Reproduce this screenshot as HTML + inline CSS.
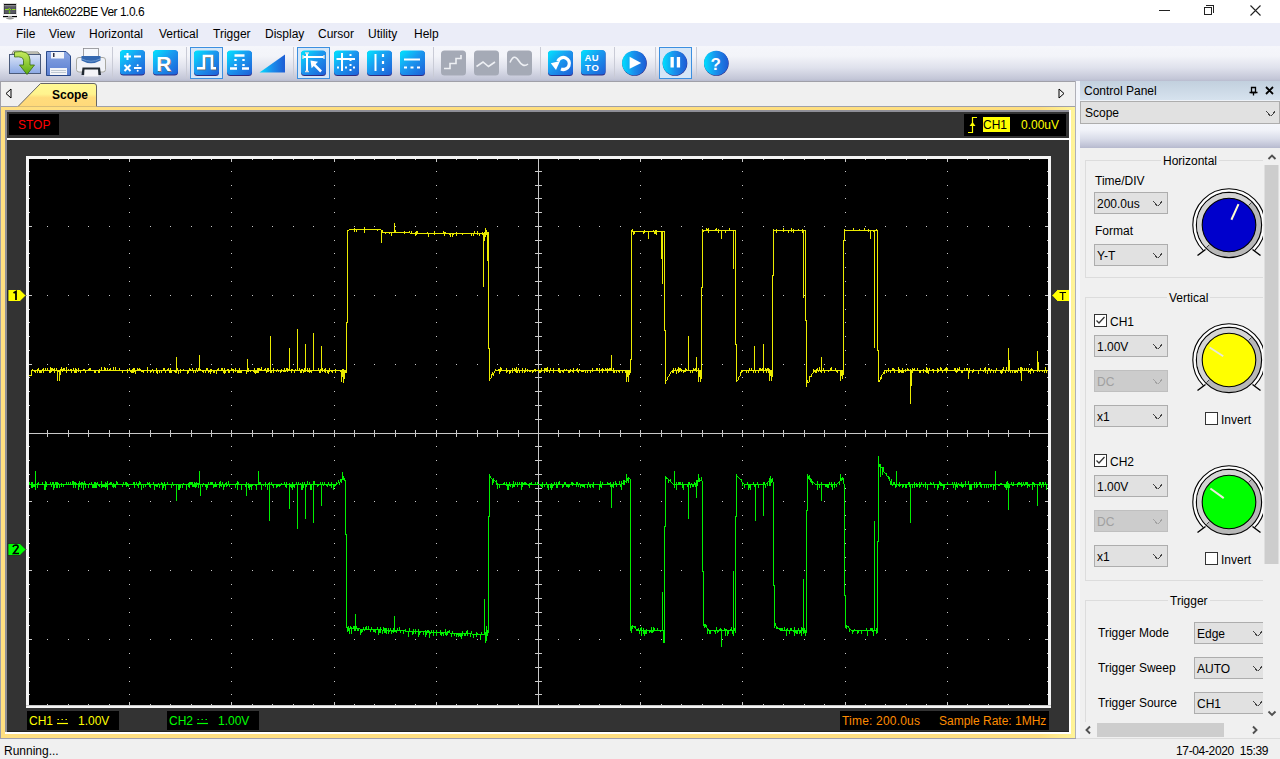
<!DOCTYPE html>
<html><head><meta charset="utf-8">
<style>
*{box-sizing:border-box}
html,body{margin:0;padding:0}
body{width:1280px;height:759px;overflow:hidden;position:relative;background:#f0f0f0;font-family:"Liberation Sans",sans-serif;font-size:12px;color:#000}
.a{position:absolute}
.t{position:absolute;white-space:nowrap;line-height:14px}
#title{left:0;top:0;width:1280px;height:23px;background:#fff}
#menu{left:0;top:23px;width:1280px;height:23px;background:#ebedf8}
#toolbar{left:0;top:46px;width:1280px;height:35px;background:linear-gradient(#f5f6fb 0px,#f3f4f9 10px,#dfe1ec 22px,#c3c6d7 33px,#b9bccf 35px)}
#tbline{left:0;top:81px;width:1075px;height:1px;background:#a0a0a8}
#tabstrip{left:0;top:82px;width:1075px;height:25px;background:#f0f0f0}
.sep{position:absolute;top:50px;width:1px;height:26px;background:#c9cbd6}
.ic{position:absolute;top:50px;width:25px;height:25px;border-radius:4px;background:linear-gradient(135deg,#00d8fa 0%,#1ea0ee 40%,#1a6ad8 100%);box-shadow:0 1px 1px rgba(60,60,90,.6)}
.gi{position:absolute;top:50px;width:25px;height:25px;border-radius:4px;background:#a5aab6}
.sel{position:absolute;top:47px;width:33px;height:32px;background:#d5e6f7;border:1px solid #3c8fe0}
.mi{position:absolute;top:26px;white-space:nowrap;line-height:16px;font-size:12px}
.ibox{position:absolute;background:#000}
.cb{position:absolute;height:22px;background:#e1e1e1;border:1px solid #adadad}
.cb span{position:absolute;left:2px;top:4px;line-height:14px;white-space:nowrap}
.cb i{position:absolute;right:5px;top:8px;width:9px;height:5px;background:linear-gradient(to top right,transparent calc(50% - 0.55px),#444 calc(50% - 0.55px),#444 calc(50% + 0.55px),transparent calc(50% + 0.55px)) left/50% 100% no-repeat,linear-gradient(to top left,transparent calc(50% - 0.55px),#444 calc(50% - 0.55px),#444 calc(50% + 0.55px),transparent calc(50% + 0.55px)) right/50% 100% no-repeat}
.cb.dis{background:#cccccc;border-color:#bfbfbf;color:#a0a0a0}
.cb.dis i{opacity:.3}
.chk{position:absolute;width:13px;height:13px;background:#fff;border:1px solid #333}
.grp{position:absolute;border:1px solid #dcdcdc}
.gl{position:absolute;background:#f0f0f0;padding:0 2px;line-height:14px;white-space:nowrap}
</style></head><body>

<!-- Title bar -->
<div id="title" class="a"></div>
<svg class="a" style="left:0;top:0" width="22" height="22" viewBox="0 0 22 22">
 <rect x="3" y="3" width="14" height="14" rx="0.5" fill="#d8d8d8"/>
 <rect x="4" y="4" width="12" height="10" fill="#111"/>
 <rect x="4.3" y="5.2" width="11.5" height="8.5" fill="#5a5a64"/>
 <rect x="4.3" y="5.2" width="11.5" height="1" fill="#9a9a9a"/>
 <path d="M5 9.5h2M7 9.5h1.5l1-1.5M10 9.5h1M12 9.5h3.5" stroke="#8fd820" stroke-width="1.2"/>
 <path d="M9.5 10.5v3" stroke="#6cc020" stroke-width="1.4"/>
 <rect x="3.5" y="14" width="13" height="2" fill="#f4f4f4"/>
 <rect x="3" y="16" width="14" height="1.2" fill="#000"/>
 <rect x="8" y="16.2" width="4" height="1.8" fill="#bbb"/>
 <ellipse cx="10" cy="18.6" rx="4" ry="0.8" fill="#999"/>
</svg>
<div class="t" style="left:23px;top:5px;font-size:12px;letter-spacing:-0.5px">Hantek6022BE Ver 1.0.6</div>
<!-- window controls -->
<div class="a" style="left:1159px;top:10px;width:11px;height:1px;background:#222"></div>
<div class="a" style="left:1204px;top:7px;width:8px;height:8px;border:1px solid #222"></div>
<div class="a" style="left:1206px;top:5px;width:8px;height:8px;border-top:1px solid #222;border-right:1px solid #222"></div>
<svg class="a" style="left:1250px;top:5px" width="11" height="11"><path d="M0.5 0.5L10.5 10.5M10.5 0.5L0.5 10.5" stroke="#222" stroke-width="1.1"/></svg>

<!-- Menu -->
<div id="menu" class="a"></div>
<div class="mi" style="left:16px">File</div>
<div class="mi" style="left:49px">View</div>
<div class="mi" style="left:89px">Horizontal</div>
<div class="mi" style="left:159px">Vertical</div>
<div class="mi" style="left:213px">Trigger</div>
<div class="mi" style="left:265px">Display</div>
<div class="mi" style="left:318px">Cursor</div>
<div class="mi" style="left:368px">Utility</div>
<div class="mi" style="left:414px">Help</div>

<!-- Toolbar -->
<div id="toolbar" class="a"></div>
<div id="tbline" class="a"></div>
<div class="a" style="left:1075px;top:81px;width:205px;height:1px;background:#a0a0a8"></div>
<div class="sel" style="left:190px"></div>
<div class="sel" style="left:297px"></div>
<div class="sel" style="left:659px"></div>
<svg class="a" style="left:0;top:46px" width="740" height="35">
<defs>
 <linearGradient id="bg1" x1="0" y1="0" x2="1" y2="1"><stop offset="0" stop-color="#00e6ff"/><stop offset="0.45" stop-color="#1a9af0"/><stop offset="1" stop-color="#1e5ed6"/></linearGradient>
 <linearGradient id="bg2" x1="0" y1="0" x2="1" y2="0"><stop offset="0" stop-color="#00e0ff"/><stop offset="0.5" stop-color="#1a8eec"/><stop offset="1" stop-color="#1e5cd4"/></linearGradient>
 <linearGradient id="fold" x1="0" y1="0" x2="0" y2="1"><stop offset="0" stop-color="#dde6f8"/><stop offset="1" stop-color="#8aa8e4"/></linearGradient>
 <linearGradient id="grn" x1="0" y1="0" x2="0" y2="1"><stop offset="0" stop-color="#c8ec60"/><stop offset="1" stop-color="#5aaa10"/></linearGradient>
 <linearGradient id="flop" x1="0" y1="0" x2="0" y2="1"><stop offset="0" stop-color="#8aa6e4"/><stop offset="1" stop-color="#5a7ed0"/></linearGradient>
</defs>
<g fill="#c9cbd6">
 <rect x="112" y="1" width="1" height="31"/><rect x="186" y="1" width="1" height="31"/><rect x="293" y="1" width="1" height="31"/>
 <rect x="433" y="1" width="1" height="31"/><rect x="540" y="1" width="1" height="31"/><rect x="614" y="1" width="1" height="31"/>
 <rect x="655" y="1" width="1" height="31"/><rect x="696" y="1" width="1" height="31"/>
</g>
<!-- folder -->
<path d="M12 8 L13.5 5 H22 L23 6 H38 L39.5 8 Z" fill="#f2f2ea" stroke="#6a6a5a" stroke-width="0.8"/>
<rect x="9.5" y="8.5" width="31" height="19" fill="url(#fold)" stroke="#4a5a7a" stroke-width="1"/>
<path d="M14.5 6 Q30 3.5 30 14 V19 H34.5 L27 28.5 L19.5 19 H23.5 V14.5 Q23.5 10 14.5 11 Z" fill="url(#grn)" stroke="#3a6a10" stroke-width="0.8"/>
<!-- save -->
<path d="M46.5 5.5 H66 L70.5 10 V29.5 H46.5 Z" fill="url(#flop)" stroke="#2a4a8a" stroke-width="1"/>
<rect x="51" y="6" width="13" height="6.5" fill="#f4f6fa"/><rect x="53" y="7" width="1.5" height="4" fill="#334"/>
<rect x="50" y="22" width="17" height="7" fill="#f2f4f8"/>
<path d="M51 24.5H66M51 26.5H66" stroke="#9ab" stroke-width="0.6"/>
<!-- printer -->
<rect x="83.5" y="2.5" width="15" height="9" fill="#f6f8fc" stroke="#8a8a90" stroke-width="0.8"/>
<rect x="76.5" y="11.5" width="29" height="14.5" rx="2.5" fill="#f0f2f8" stroke="#a0a098" stroke-width="0.9"/>
<path d="M81.5 10 H100.5 V14.5 Q91 20 81.5 14.5 Z" fill="#3468b0"/>
<path d="M82 13 Q91 17.5 100 13" fill="none" stroke="#6a98d0" stroke-width="1"/>
<path d="M82.5 21.5 H100 L101 29 H81.5 Z" fill="#202830"/>
<path d="M84.5 23.5 H98 L98.5 30.5 H84 Z" fill="#f4f4f8"/>
<!-- calc -->
<rect x="120" y="4.5" width="25" height="25" rx="3.5" fill="#302a80"/>
<rect x="120" y="4" width="25" height="24.5" rx="3.5" fill="url(#bg1)"/>
<path d="M124 10.5h7M127.5 7v7M134 10.5h7M124.5 19l6 6M130.5 19l-6 6M134 22h7.5" stroke="#fff" stroke-width="2"/>
<circle cx="137.7" cy="19.3" r="1" fill="#fff"/><circle cx="137.7" cy="24.7" r="1" fill="#fff"/>
<!-- R -->
<rect x="153" y="4.5" width="25" height="25" rx="3.5" fill="#302a80"/>
<rect x="153" y="4" width="25" height="24.5" rx="3.5" fill="url(#bg1)"/>
<text x="157" y="25.5" font-family="Liberation Sans" font-weight="bold" font-size="21" fill="#777">R</text>
<text x="156.3" y="24.8" font-family="Liberation Sans" font-weight="bold" font-size="21" fill="#fff">R</text>
<!-- square wave -->
<rect x="194" y="5" width="25" height="25" rx="3.5" fill="#302a80"/>
<rect x="194" y="4.5" width="25" height="24.5" rx="3.5" fill="url(#bg1)"/>
<path d="M197 22.3H204V10H212V22.3H216" fill="none" stroke="#666" stroke-width="2.6" transform="translate(0.6,0.6)"/>
<path d="M197 22.3H204V10H212V22.3H216" fill="none" stroke="#fff" stroke-width="2.6"/>
<!-- dotted square -->
<rect x="227" y="5" width="25" height="25" rx="3.5" fill="#302a80"/>
<rect x="227" y="4.5" width="25" height="24.5" rx="3.5" fill="url(#bg1)"/>
<path d="M230 22.5H237M242 22.5H249M234.5 9.5H244.5" stroke="#fff" stroke-width="2.4"/>
<path d="M235.5 13v2M235.5 18v2M243.5 13v2M243.5 18v2" stroke="#fff" stroke-width="2.4"/>
<!-- ramp -->
<path d="M259.5 26.5 L285 8.5 V26.5 Z" fill="url(#bg2)"/>
<!-- cursor -->
<rect x="301" y="5" width="25" height="25" rx="3.5" fill="#302a80"/>
<rect x="301" y="4.5" width="25" height="24.5" rx="3.5" fill="url(#bg1)"/>
<path d="M307 7V25.5M303 11H324" stroke="#fff" stroke-width="2"/>
<path d="M305 7h4M305 25.5h4M303 9v4M324 9v4" stroke="#ddd" stroke-width="1.4"/>
<path d="M310.5 14.5 L318 15.8 L315.6 18.2 L322 24.6 L320.2 26.4 L313.8 20 L311.6 22.2 Z" fill="#fff"/>
<!-- grid -->
<rect x="334" y="5" width="25" height="25" rx="3.5" fill="#302a80"/>
<rect x="334" y="4.5" width="25" height="24.5" rx="3.5" fill="url(#bg1)"/>
<path d="M342 7V25M336.5 13H355" stroke="#fff" stroke-width="2"/>
<path d="M350.5 8v2M350.5 13v2M350.5 18v2M350.5 23v2M337 21.5h2M345 21.5h2M353 21.5h2" stroke="#fff" stroke-width="2"/>
<!-- vertical lines -->
<rect x="367" y="5" width="25" height="25" rx="3.5" fill="#302a80"/>
<rect x="367" y="4.5" width="25" height="24.5" rx="3.5" fill="url(#bg1)"/>
<path d="M375.5 8V25" stroke="#fff" stroke-width="2"/>
<path d="M383 8v3M383 15v3M383 22v3" stroke="#fff" stroke-width="2.2"/>
<!-- horizontal lines -->
<rect x="400" y="5" width="25" height="25" rx="3.5" fill="#302a80"/>
<rect x="400" y="4.5" width="25" height="24.5" rx="3.5" fill="url(#bg1)"/>
<path d="M404 13.5H420" stroke="#fff" stroke-width="2"/>
<path d="M404 21.5h3M410.5 21.5h3M417 21.5h3" stroke="#fff" stroke-width="2.2"/>
<!-- gray -->
<rect x="441" y="4.5" width="25" height="25" rx="3.5" fill="#a5aab6"/>
<path d="M444 22.5H450V17.5H456V12.5H461V9" fill="none" stroke="#eef0f4" stroke-width="1.6"/>
<rect x="474" y="4.5" width="25" height="25" rx="3.5" fill="#a5aab6"/>
<path d="M476.5 20.5L483 16L488.5 20.5L495 16" fill="none" stroke="#eef0f4" stroke-width="1.6"/>
<rect x="507" y="4.5" width="25" height="25" rx="3.5" fill="#a5aab6"/>
<path d="M510 16.5Q514 7 518.5 14.5T528 18" fill="none" stroke="#eef0f4" stroke-width="1.6"/>
<!-- refresh -->
<rect x="548" y="5" width="25" height="25" rx="3.5" fill="#302a80"/>
<rect x="548" y="4.5" width="25" height="24.5" rx="3.5" fill="url(#bg1)"/>
<path d="M557.8 15.2 A6 6 0 1 1 561 23" fill="none" stroke="#fff" stroke-width="3.3"/>
<path d="M550.8 17.3 L560 15 L556 24 Z" fill="#fff"/>
<!-- AUTO -->
<rect x="581" y="4.5" width="24.5" height="25" rx="3.5" fill="#302a80"/>
<rect x="581" y="4" width="24.5" height="24.5" rx="3.5" fill="url(#bg1)"/>
<text x="584.5" y="15" font-family="Liberation Sans" font-weight="bold" font-size="9.5" fill="#fff" letter-spacing="0.5">AU</text>
<text x="585" y="25.3" font-family="Liberation Sans" font-weight="bold" font-size="9.5" fill="#fff" letter-spacing="0.8">TO</text>
<!-- play -->
<circle cx="634.5" cy="17.5" r="12.3" fill="#302a80"/>
<circle cx="634.3" cy="17" r="12.2" fill="url(#bg2)"/>
<path d="M629.6 10.7 V22.7 L641.2 16.9 Z" fill="#fff"/>
<!-- pause -->
<circle cx="675" cy="17.5" r="12.3" fill="#302a80"/>
<circle cx="674.8" cy="17" r="12.2" fill="url(#bg2)"/>
<rect x="670.5" y="11" width="3.3" height="10.5" fill="#fff"/><rect x="676.8" y="11" width="3.3" height="10.5" fill="#fff"/>
<!-- help -->
<circle cx="716.4" cy="17.5" r="12.3" fill="#302a80"/>
<circle cx="716.2" cy="17" r="12.2" fill="url(#bg2)"/>
<text x="710.5" y="24" font-family="Liberation Sans" font-weight="bold" font-size="17" fill="#fff">?</text>
</svg>


<!-- Tab strip -->
<div id="tabstrip" class="a"></div>
<div class="a" style="left:0;top:82px;width:1px;height:25px;background:#a0a0a8"></div>
<div class="a" style="left:0;top:106px;width:1075px;height:1px;background:#a0a0a8"></div>
<svg class="a" style="left:0;top:82px" width="1075" height="26">
 <defs><linearGradient id="tabg" x1="0" y1="0" x2="0" y2="1">
  <stop offset="0" stop-color="#fff994"/><stop offset="0.45" stop-color="#fff48e"/><stop offset="0.6" stop-color="#ffdc7c"/><stop offset="1" stop-color="#ffd97a"/></linearGradient></defs>
 <path d="M17.5 25 L40.5 1.5 H94 Q96.5 1.5 96.5 4 V25 Z" fill="url(#tabg)" stroke="#666" stroke-width="1"/>
 <rect x="17" y="24.5" width="80" height="2" fill="#ffd97a"/>
 <path d="M6 7.5 L11 3 V12 Z" transform="translate(0,4)" fill="none" stroke="#000" stroke-width="1"/>
 <path d="M1059 7 L1064 11.5 L1059 16 Z" fill="none" stroke="#000" stroke-width="1"/>
</svg>
<div class="t" style="left:52px;top:88px;font-weight:bold">Scope</div>

<!-- Scope frame -->
<div class="a" style="left:0;top:107px;width:1075px;height:632px;background:#ffdf80"></div>
<div class="a" style="left:1040px;top:107px;width:35px;height:632px;background:linear-gradient(90deg,#ffdf80,#fff59a)"></div>
<div class="a" style="left:0;top:107px;width:1px;height:632px;background:#a0a0a8"></div>
<div class="a" style="left:1075px;top:81px;width:1px;height:658px;background:#b0b0b8"></div>
<div class="a" style="left:0;top:738px;width:1076px;height:1px;background:#a0a0b0"></div>
<div class="a" style="left:5px;top:110px;width:1066px;height:624px;background:#fff"></div>
<div class="a" style="left:5px;top:110px;width:1064px;height:622px;background:#8e8e96"></div>
<div class="a" style="left:7px;top:112px;width:1062px;height:620px;background:#333"></div>
<div class="a" style="left:7px;top:731px;width:1062px;height:1px;background:#222"></div>

<div class="ibox" style="left:9px;top:114px;width:50px;height:21px"></div>
<div class="t" style="left:18px;top:118px;color:#f00;font-size:12px">STOP</div>
<div class="a" style="left:7px;top:138px;width:1062px;height:2px;background:#fff"></div>

<div class="ibox" style="left:964px;top:114px;width:102px;height:22px"></div>
<svg class="a" style="left:968px;top:116px" width="11" height="18"><path d="M0 16.5H4.5V1.5H9" fill="none" stroke="#ff0" stroke-width="1.2"/><path d="M1.5 10H7.5L4.5 6Z" fill="#ff0"/></svg>
<div class="a" style="left:983px;top:117px;width:27px;height:15px;background:#ff0"></div>
<div class="t" style="left:983px;top:118px;color:#000">CH1</div>
<div class="t" style="left:1021px;top:118px;color:#ff0">0.00uV</div>

<svg class="a" style="left:0;top:0" width="1280" height="759" shape-rendering="crispEdges">
 <rect x="26" y="156" width="1025" height="552" fill="#f4f4f4"/>
 <rect x="26" y="705" width="1025" height="1" fill="#c8c8c8"/>
 <rect x="29" y="159" width="1019" height="546" fill="#000"/>
 <path fill="#c8c8c8" d="M129 171h1v1h-1zM129 185h1v1h-1zM129 198h1v1h-1zM129 212h1v1h-1zM129 226h1v1h-1zM129 240h1v1h-1zM129 253h1v1h-1zM129 267h1v1h-1zM129 281h1v1h-1zM129 295h1v1h-1zM129 309h1v1h-1zM129 322h1v1h-1zM129 336h1v1h-1zM129 350h1v1h-1zM129 364h1v1h-1zM129 377h1v1h-1zM129 391h1v1h-1zM129 405h1v1h-1zM129 419h1v1h-1zM129 433h1v1h-1zM129 446h1v1h-1zM129 460h1v1h-1zM129 474h1v1h-1zM129 488h1v1h-1zM129 501h1v1h-1zM129 515h1v1h-1zM129 529h1v1h-1zM129 543h1v1h-1zM129 557h1v1h-1zM129 570h1v1h-1zM129 584h1v1h-1zM129 598h1v1h-1zM129 612h1v1h-1zM129 625h1v1h-1zM129 639h1v1h-1zM129 653h1v1h-1zM129 667h1v1h-1zM129 681h1v1h-1zM129 694h1v1h-1zM231 171h1v1h-1zM231 185h1v1h-1zM231 198h1v1h-1zM231 212h1v1h-1zM231 226h1v1h-1zM231 240h1v1h-1zM231 253h1v1h-1zM231 267h1v1h-1zM231 281h1v1h-1zM231 295h1v1h-1zM231 309h1v1h-1zM231 322h1v1h-1zM231 336h1v1h-1zM231 350h1v1h-1zM231 364h1v1h-1zM231 377h1v1h-1zM231 391h1v1h-1zM231 405h1v1h-1zM231 419h1v1h-1zM231 433h1v1h-1zM231 446h1v1h-1zM231 460h1v1h-1zM231 474h1v1h-1zM231 488h1v1h-1zM231 501h1v1h-1zM231 515h1v1h-1zM231 529h1v1h-1zM231 543h1v1h-1zM231 557h1v1h-1zM231 570h1v1h-1zM231 584h1v1h-1zM231 598h1v1h-1zM231 612h1v1h-1zM231 625h1v1h-1zM231 639h1v1h-1zM231 653h1v1h-1zM231 667h1v1h-1zM231 681h1v1h-1zM231 694h1v1h-1zM334 171h1v1h-1zM334 185h1v1h-1zM334 198h1v1h-1zM334 212h1v1h-1zM334 226h1v1h-1zM334 240h1v1h-1zM334 253h1v1h-1zM334 267h1v1h-1zM334 281h1v1h-1zM334 295h1v1h-1zM334 309h1v1h-1zM334 322h1v1h-1zM334 336h1v1h-1zM334 350h1v1h-1zM334 364h1v1h-1zM334 377h1v1h-1zM334 391h1v1h-1zM334 405h1v1h-1zM334 419h1v1h-1zM334 433h1v1h-1zM334 446h1v1h-1zM334 460h1v1h-1zM334 474h1v1h-1zM334 488h1v1h-1zM334 501h1v1h-1zM334 515h1v1h-1zM334 529h1v1h-1zM334 543h1v1h-1zM334 557h1v1h-1zM334 570h1v1h-1zM334 584h1v1h-1zM334 598h1v1h-1zM334 612h1v1h-1zM334 625h1v1h-1zM334 639h1v1h-1zM334 653h1v1h-1zM334 667h1v1h-1zM334 681h1v1h-1zM334 694h1v1h-1zM436 171h1v1h-1zM436 185h1v1h-1zM436 198h1v1h-1zM436 212h1v1h-1zM436 226h1v1h-1zM436 240h1v1h-1zM436 253h1v1h-1zM436 267h1v1h-1zM436 281h1v1h-1zM436 295h1v1h-1zM436 309h1v1h-1zM436 322h1v1h-1zM436 336h1v1h-1zM436 350h1v1h-1zM436 364h1v1h-1zM436 377h1v1h-1zM436 391h1v1h-1zM436 405h1v1h-1zM436 419h1v1h-1zM436 433h1v1h-1zM436 446h1v1h-1zM436 460h1v1h-1zM436 474h1v1h-1zM436 488h1v1h-1zM436 501h1v1h-1zM436 515h1v1h-1zM436 529h1v1h-1zM436 543h1v1h-1zM436 557h1v1h-1zM436 570h1v1h-1zM436 584h1v1h-1zM436 598h1v1h-1zM436 612h1v1h-1zM436 625h1v1h-1zM436 639h1v1h-1zM436 653h1v1h-1zM436 667h1v1h-1zM436 681h1v1h-1zM436 694h1v1h-1zM640 171h1v1h-1zM640 185h1v1h-1zM640 198h1v1h-1zM640 212h1v1h-1zM640 226h1v1h-1zM640 240h1v1h-1zM640 253h1v1h-1zM640 267h1v1h-1zM640 281h1v1h-1zM640 295h1v1h-1zM640 309h1v1h-1zM640 322h1v1h-1zM640 336h1v1h-1zM640 350h1v1h-1zM640 364h1v1h-1zM640 377h1v1h-1zM640 391h1v1h-1zM640 405h1v1h-1zM640 419h1v1h-1zM640 433h1v1h-1zM640 446h1v1h-1zM640 460h1v1h-1zM640 474h1v1h-1zM640 488h1v1h-1zM640 501h1v1h-1zM640 515h1v1h-1zM640 529h1v1h-1zM640 543h1v1h-1zM640 557h1v1h-1zM640 570h1v1h-1zM640 584h1v1h-1zM640 598h1v1h-1zM640 612h1v1h-1zM640 625h1v1h-1zM640 639h1v1h-1zM640 653h1v1h-1zM640 667h1v1h-1zM640 681h1v1h-1zM640 694h1v1h-1zM742 171h1v1h-1zM742 185h1v1h-1zM742 198h1v1h-1zM742 212h1v1h-1zM742 226h1v1h-1zM742 240h1v1h-1zM742 253h1v1h-1zM742 267h1v1h-1zM742 281h1v1h-1zM742 295h1v1h-1zM742 309h1v1h-1zM742 322h1v1h-1zM742 336h1v1h-1zM742 350h1v1h-1zM742 364h1v1h-1zM742 377h1v1h-1zM742 391h1v1h-1zM742 405h1v1h-1zM742 419h1v1h-1zM742 433h1v1h-1zM742 446h1v1h-1zM742 460h1v1h-1zM742 474h1v1h-1zM742 488h1v1h-1zM742 501h1v1h-1zM742 515h1v1h-1zM742 529h1v1h-1zM742 543h1v1h-1zM742 557h1v1h-1zM742 570h1v1h-1zM742 584h1v1h-1zM742 598h1v1h-1zM742 612h1v1h-1zM742 625h1v1h-1zM742 639h1v1h-1zM742 653h1v1h-1zM742 667h1v1h-1zM742 681h1v1h-1zM742 694h1v1h-1zM845 171h1v1h-1zM845 185h1v1h-1zM845 198h1v1h-1zM845 212h1v1h-1zM845 226h1v1h-1zM845 240h1v1h-1zM845 253h1v1h-1zM845 267h1v1h-1zM845 281h1v1h-1zM845 295h1v1h-1zM845 309h1v1h-1zM845 322h1v1h-1zM845 336h1v1h-1zM845 350h1v1h-1zM845 364h1v1h-1zM845 377h1v1h-1zM845 391h1v1h-1zM845 405h1v1h-1zM845 419h1v1h-1zM845 433h1v1h-1zM845 446h1v1h-1zM845 460h1v1h-1zM845 474h1v1h-1zM845 488h1v1h-1zM845 501h1v1h-1zM845 515h1v1h-1zM845 529h1v1h-1zM845 543h1v1h-1zM845 557h1v1h-1zM845 570h1v1h-1zM845 584h1v1h-1zM845 598h1v1h-1zM845 612h1v1h-1zM845 625h1v1h-1zM845 639h1v1h-1zM845 653h1v1h-1zM845 667h1v1h-1zM845 681h1v1h-1zM845 694h1v1h-1zM947 171h1v1h-1zM947 185h1v1h-1zM947 198h1v1h-1zM947 212h1v1h-1zM947 226h1v1h-1zM947 240h1v1h-1zM947 253h1v1h-1zM947 267h1v1h-1zM947 281h1v1h-1zM947 295h1v1h-1zM947 309h1v1h-1zM947 322h1v1h-1zM947 336h1v1h-1zM947 350h1v1h-1zM947 364h1v1h-1zM947 377h1v1h-1zM947 391h1v1h-1zM947 405h1v1h-1zM947 419h1v1h-1zM947 433h1v1h-1zM947 446h1v1h-1zM947 460h1v1h-1zM947 474h1v1h-1zM947 488h1v1h-1zM947 501h1v1h-1zM947 515h1v1h-1zM947 529h1v1h-1zM947 543h1v1h-1zM947 557h1v1h-1zM947 570h1v1h-1zM947 584h1v1h-1zM947 598h1v1h-1zM947 612h1v1h-1zM947 625h1v1h-1zM947 639h1v1h-1zM947 653h1v1h-1zM947 667h1v1h-1zM947 681h1v1h-1zM947 694h1v1h-1zM47 226h1v1h-1zM68 226h1v1h-1zM88 226h1v1h-1zM109 226h1v1h-1zM150 226h1v1h-1zM170 226h1v1h-1zM191 226h1v1h-1zM211 226h1v1h-1zM252 226h1v1h-1zM272 226h1v1h-1zM293 226h1v1h-1zM313 226h1v1h-1zM354 226h1v1h-1zM374 226h1v1h-1zM395 226h1v1h-1zM415 226h1v1h-1zM456 226h1v1h-1zM477 226h1v1h-1zM497 226h1v1h-1zM518 226h1v1h-1zM558 226h1v1h-1zM579 226h1v1h-1zM599 226h1v1h-1zM620 226h1v1h-1zM661 226h1v1h-1zM681 226h1v1h-1zM702 226h1v1h-1zM722 226h1v1h-1zM763 226h1v1h-1zM783 226h1v1h-1zM804 226h1v1h-1zM824 226h1v1h-1zM865 226h1v1h-1zM885 226h1v1h-1zM906 226h1v1h-1zM926 226h1v1h-1zM967 226h1v1h-1zM988 226h1v1h-1zM1008 226h1v1h-1zM1029 226h1v1h-1zM47 295h1v1h-1zM68 295h1v1h-1zM88 295h1v1h-1zM109 295h1v1h-1zM150 295h1v1h-1zM170 295h1v1h-1zM191 295h1v1h-1zM211 295h1v1h-1zM252 295h1v1h-1zM272 295h1v1h-1zM293 295h1v1h-1zM313 295h1v1h-1zM354 295h1v1h-1zM374 295h1v1h-1zM395 295h1v1h-1zM415 295h1v1h-1zM456 295h1v1h-1zM477 295h1v1h-1zM497 295h1v1h-1zM518 295h1v1h-1zM558 295h1v1h-1zM579 295h1v1h-1zM599 295h1v1h-1zM620 295h1v1h-1zM661 295h1v1h-1zM681 295h1v1h-1zM702 295h1v1h-1zM722 295h1v1h-1zM763 295h1v1h-1zM783 295h1v1h-1zM804 295h1v1h-1zM824 295h1v1h-1zM865 295h1v1h-1zM885 295h1v1h-1zM906 295h1v1h-1zM926 295h1v1h-1zM967 295h1v1h-1zM988 295h1v1h-1zM1008 295h1v1h-1zM1029 295h1v1h-1zM47 364h1v1h-1zM68 364h1v1h-1zM88 364h1v1h-1zM109 364h1v1h-1zM150 364h1v1h-1zM170 364h1v1h-1zM191 364h1v1h-1zM211 364h1v1h-1zM252 364h1v1h-1zM272 364h1v1h-1zM293 364h1v1h-1zM313 364h1v1h-1zM354 364h1v1h-1zM374 364h1v1h-1zM395 364h1v1h-1zM415 364h1v1h-1zM456 364h1v1h-1zM477 364h1v1h-1zM497 364h1v1h-1zM518 364h1v1h-1zM558 364h1v1h-1zM579 364h1v1h-1zM599 364h1v1h-1zM620 364h1v1h-1zM661 364h1v1h-1zM681 364h1v1h-1zM702 364h1v1h-1zM722 364h1v1h-1zM763 364h1v1h-1zM783 364h1v1h-1zM804 364h1v1h-1zM824 364h1v1h-1zM865 364h1v1h-1zM885 364h1v1h-1zM906 364h1v1h-1zM926 364h1v1h-1zM967 364h1v1h-1zM988 364h1v1h-1zM1008 364h1v1h-1zM1029 364h1v1h-1zM47 501h1v1h-1zM68 501h1v1h-1zM88 501h1v1h-1zM109 501h1v1h-1zM150 501h1v1h-1zM170 501h1v1h-1zM191 501h1v1h-1zM211 501h1v1h-1zM252 501h1v1h-1zM272 501h1v1h-1zM293 501h1v1h-1zM313 501h1v1h-1zM354 501h1v1h-1zM374 501h1v1h-1zM395 501h1v1h-1zM415 501h1v1h-1zM456 501h1v1h-1zM477 501h1v1h-1zM497 501h1v1h-1zM518 501h1v1h-1zM558 501h1v1h-1zM579 501h1v1h-1zM599 501h1v1h-1zM620 501h1v1h-1zM661 501h1v1h-1zM681 501h1v1h-1zM702 501h1v1h-1zM722 501h1v1h-1zM763 501h1v1h-1zM783 501h1v1h-1zM804 501h1v1h-1zM824 501h1v1h-1zM865 501h1v1h-1zM885 501h1v1h-1zM906 501h1v1h-1zM926 501h1v1h-1zM967 501h1v1h-1zM988 501h1v1h-1zM1008 501h1v1h-1zM1029 501h1v1h-1zM47 570h1v1h-1zM68 570h1v1h-1zM88 570h1v1h-1zM109 570h1v1h-1zM150 570h1v1h-1zM170 570h1v1h-1zM191 570h1v1h-1zM211 570h1v1h-1zM252 570h1v1h-1zM272 570h1v1h-1zM293 570h1v1h-1zM313 570h1v1h-1zM354 570h1v1h-1zM374 570h1v1h-1zM395 570h1v1h-1zM415 570h1v1h-1zM456 570h1v1h-1zM477 570h1v1h-1zM497 570h1v1h-1zM518 570h1v1h-1zM558 570h1v1h-1zM579 570h1v1h-1zM599 570h1v1h-1zM620 570h1v1h-1zM661 570h1v1h-1zM681 570h1v1h-1zM702 570h1v1h-1zM722 570h1v1h-1zM763 570h1v1h-1zM783 570h1v1h-1zM804 570h1v1h-1zM824 570h1v1h-1zM865 570h1v1h-1zM885 570h1v1h-1zM906 570h1v1h-1zM926 570h1v1h-1zM967 570h1v1h-1zM988 570h1v1h-1zM1008 570h1v1h-1zM1029 570h1v1h-1zM47 639h1v1h-1zM68 639h1v1h-1zM88 639h1v1h-1zM109 639h1v1h-1zM150 639h1v1h-1zM170 639h1v1h-1zM191 639h1v1h-1zM211 639h1v1h-1zM252 639h1v1h-1zM272 639h1v1h-1zM293 639h1v1h-1zM313 639h1v1h-1zM354 639h1v1h-1zM374 639h1v1h-1zM395 639h1v1h-1zM415 639h1v1h-1zM456 639h1v1h-1zM477 639h1v1h-1zM497 639h1v1h-1zM518 639h1v1h-1zM558 639h1v1h-1zM579 639h1v1h-1zM599 639h1v1h-1zM620 639h1v1h-1zM661 639h1v1h-1zM681 639h1v1h-1zM702 639h1v1h-1zM722 639h1v1h-1zM763 639h1v1h-1zM783 639h1v1h-1zM804 639h1v1h-1zM824 639h1v1h-1zM865 639h1v1h-1zM885 639h1v1h-1zM906 639h1v1h-1zM926 639h1v1h-1zM967 639h1v1h-1zM988 639h1v1h-1zM1008 639h1v1h-1zM1029 639h1v1h-1zM47 159h1v1h-1zM47 704h1v1h-1zM68 159h1v1h-1zM68 704h1v1h-1zM88 159h1v1h-1zM88 704h1v1h-1zM109 159h1v1h-1zM109 704h1v1h-1zM129 159h1v3h-1zM129 702h1v3h-1zM150 159h1v1h-1zM150 704h1v1h-1zM170 159h1v1h-1zM170 704h1v1h-1zM191 159h1v1h-1zM191 704h1v1h-1zM211 159h1v1h-1zM211 704h1v1h-1zM231 159h1v3h-1zM231 702h1v3h-1zM252 159h1v1h-1zM252 704h1v1h-1zM272 159h1v1h-1zM272 704h1v1h-1zM293 159h1v1h-1zM293 704h1v1h-1zM313 159h1v1h-1zM313 704h1v1h-1zM334 159h1v3h-1zM334 702h1v3h-1zM354 159h1v1h-1zM354 704h1v1h-1zM374 159h1v1h-1zM374 704h1v1h-1zM395 159h1v1h-1zM395 704h1v1h-1zM415 159h1v1h-1zM415 704h1v1h-1zM436 159h1v3h-1zM436 702h1v3h-1zM456 159h1v1h-1zM456 704h1v1h-1zM477 159h1v1h-1zM477 704h1v1h-1zM497 159h1v1h-1zM497 704h1v1h-1zM518 159h1v1h-1zM518 704h1v1h-1zM538 159h1v3h-1zM538 702h1v3h-1zM558 159h1v1h-1zM558 704h1v1h-1zM579 159h1v1h-1zM579 704h1v1h-1zM599 159h1v1h-1zM599 704h1v1h-1zM620 159h1v1h-1zM620 704h1v1h-1zM640 159h1v3h-1zM640 702h1v3h-1zM661 159h1v1h-1zM661 704h1v1h-1zM681 159h1v1h-1zM681 704h1v1h-1zM702 159h1v1h-1zM702 704h1v1h-1zM722 159h1v1h-1zM722 704h1v1h-1zM742 159h1v3h-1zM742 702h1v3h-1zM763 159h1v1h-1zM763 704h1v1h-1zM783 159h1v1h-1zM783 704h1v1h-1zM804 159h1v1h-1zM804 704h1v1h-1zM824 159h1v1h-1zM824 704h1v1h-1zM845 159h1v3h-1zM845 702h1v3h-1zM865 159h1v1h-1zM865 704h1v1h-1zM885 159h1v1h-1zM885 704h1v1h-1zM906 159h1v1h-1zM906 704h1v1h-1zM926 159h1v1h-1zM926 704h1v1h-1zM947 159h1v3h-1zM947 702h1v3h-1zM967 159h1v1h-1zM967 704h1v1h-1zM988 159h1v1h-1zM988 704h1v1h-1zM1008 159h1v1h-1zM1008 704h1v1h-1zM1029 159h1v1h-1zM1029 704h1v1h-1zM29 171h1v1h-1zM1047 171h1v1h-1zM29 185h1v1h-1zM1047 185h1v1h-1zM29 198h1v1h-1zM1047 198h1v1h-1zM29 212h1v1h-1zM1047 212h1v1h-1zM29 226h3v1h-3zM1045 226h3v1h-3zM29 240h1v1h-1zM1047 240h1v1h-1zM29 253h1v1h-1zM1047 253h1v1h-1zM29 267h1v1h-1zM1047 267h1v1h-1zM29 281h1v1h-1zM1047 281h1v1h-1zM29 295h3v1h-3zM1045 295h3v1h-3zM29 309h1v1h-1zM1047 309h1v1h-1zM29 322h1v1h-1zM1047 322h1v1h-1zM29 336h1v1h-1zM1047 336h1v1h-1zM29 350h1v1h-1zM1047 350h1v1h-1zM29 364h3v1h-3zM1045 364h3v1h-3zM29 377h1v1h-1zM1047 377h1v1h-1zM29 391h1v1h-1zM1047 391h1v1h-1zM29 405h1v1h-1zM1047 405h1v1h-1zM29 419h1v1h-1zM1047 419h1v1h-1zM29 433h3v1h-3zM1045 433h3v1h-3zM29 446h1v1h-1zM1047 446h1v1h-1zM29 460h1v1h-1zM1047 460h1v1h-1zM29 474h1v1h-1zM1047 474h1v1h-1zM29 488h1v1h-1zM1047 488h1v1h-1zM29 501h3v1h-3zM1045 501h3v1h-3zM29 515h1v1h-1zM1047 515h1v1h-1zM29 529h1v1h-1zM1047 529h1v1h-1zM29 543h1v1h-1zM1047 543h1v1h-1zM29 557h1v1h-1zM1047 557h1v1h-1zM29 570h3v1h-3zM1045 570h3v1h-3zM29 584h1v1h-1zM1047 584h1v1h-1zM29 598h1v1h-1zM1047 598h1v1h-1zM29 612h1v1h-1zM1047 612h1v1h-1zM29 625h1v1h-1zM1047 625h1v1h-1zM29 639h3v1h-3zM1045 639h3v1h-3zM29 653h1v1h-1zM1047 653h1v1h-1zM29 667h1v1h-1zM1047 667h1v1h-1zM29 681h1v1h-1zM1047 681h1v1h-1zM29 694h1v1h-1zM1047 694h1v1h-1zM538 159h1v546h-1zM29 433h1019v1h-1019zM535 171h7v1h-7zM535 185h7v1h-7zM535 198h7v1h-7zM535 212h7v1h-7zM535 226h7v1h-7zM535 240h7v1h-7zM535 253h7v1h-7zM535 267h7v1h-7zM535 281h7v1h-7zM535 295h7v1h-7zM535 309h7v1h-7zM535 322h7v1h-7zM535 336h7v1h-7zM535 350h7v1h-7zM535 364h7v1h-7zM535 377h7v1h-7zM535 391h7v1h-7zM535 405h7v1h-7zM535 419h7v1h-7zM535 446h7v1h-7zM535 460h7v1h-7zM535 474h7v1h-7zM535 488h7v1h-7zM535 501h7v1h-7zM535 515h7v1h-7zM535 529h7v1h-7zM535 543h7v1h-7zM535 557h7v1h-7zM535 570h7v1h-7zM535 584h7v1h-7zM535 598h7v1h-7zM535 612h7v1h-7zM535 625h7v1h-7zM535 639h7v1h-7zM535 653h7v1h-7zM535 667h7v1h-7zM535 681h7v1h-7zM535 694h7v1h-7zM47 430h1v7h-1zM68 430h1v7h-1zM88 430h1v7h-1zM109 430h1v7h-1zM129 430h1v7h-1zM150 430h1v7h-1zM170 430h1v7h-1zM191 430h1v7h-1zM211 430h1v7h-1zM231 430h1v7h-1zM252 430h1v7h-1zM272 430h1v7h-1zM293 430h1v7h-1zM313 430h1v7h-1zM334 430h1v7h-1zM354 430h1v7h-1zM374 430h1v7h-1zM395 430h1v7h-1zM415 430h1v7h-1zM436 430h1v7h-1zM456 430h1v7h-1zM477 430h1v7h-1zM497 430h1v7h-1zM518 430h1v7h-1zM558 430h1v7h-1zM579 430h1v7h-1zM599 430h1v7h-1zM620 430h1v7h-1zM640 430h1v7h-1zM661 430h1v7h-1zM681 430h1v7h-1zM702 430h1v7h-1zM722 430h1v7h-1zM742 430h1v7h-1zM763 430h1v7h-1zM783 430h1v7h-1zM804 430h1v7h-1zM824 430h1v7h-1zM845 430h1v7h-1zM865 430h1v7h-1zM885 430h1v7h-1zM906 430h1v7h-1zM926 430h1v7h-1zM947 430h1v7h-1zM967 430h1v7h-1zM988 430h1v7h-1zM1008 430h1v7h-1zM1029 430h1v7h-1z"/>
 <path fill="#ebeb00" d="M29 375h1v1h-1zM30 375h1v1h-1zM31 370h1v6h-1zM32 369h1v2h-1zM33 370h1v1h-1zM34 370h1v2h-1zM35 370h1v3h-1zM36 370h1v1h-1zM37 369h1v4h-1zM38 368h1v3h-1zM39 370h1v3h-1zM40 370h1v3h-1zM41 370h1v3h-1zM42 369h1v2h-1zM43 368h1v5h-1zM44 370h1v1h-1zM45 368h1v3h-1zM46 370h1v1h-1zM47 368h1v3h-1zM48 370h1v1h-1zM49 370h1v3h-1zM50 367h1v6h-1zM51 368h1v4h-1zM52 368h1v3h-1zM53 369h1v2h-1zM54 368h1v5h-1zM55 370h1v1h-1zM56 368h1v3h-1zM57 370h1v11h-1zM58 370h1v2h-1zM59 370h1v11h-1zM60 369h1v6h-1zM61 367h1v4h-1zM62 369h1v3h-1zM63 368h1v3h-1zM64 368h1v3h-1zM65 370h1v1h-1zM66 367h1v6h-1zM67 370h1v1h-1zM68 369h1v2h-1zM69 370h1v1h-1zM70 369h1v2h-1zM71 369h1v4h-1zM72 370h1v1h-1zM73 368h1v3h-1zM74 370h1v3h-1zM75 368h1v5h-1zM76 369h1v4h-1zM77 370h1v1h-1zM78 368h1v4h-1zM79 370h1v1h-1zM80 370h1v3h-1zM81 370h1v1h-1zM82 370h1v1h-1zM83 369h1v2h-1zM84 369h1v2h-1zM85 370h1v3h-1zM86 370h1v1h-1zM87 370h1v1h-1zM88 369h1v2h-1zM89 368h1v3h-1zM90 368h1v3h-1zM91 370h1v1h-1zM92 370h1v1h-1zM93 370h1v1h-1zM94 370h1v3h-1zM95 370h1v3h-1zM96 370h1v1h-1zM97 370h1v1h-1zM98 370h1v3h-1zM99 369h1v4h-1zM100 370h1v1h-1zM101 367h1v4h-1zM102 370h1v1h-1zM103 370h1v1h-1zM104 367h1v4h-1zM105 368h1v3h-1zM106 370h1v1h-1zM107 368h1v3h-1zM108 370h1v1h-1zM109 369h1v2h-1zM110 368h1v3h-1zM111 370h1v1h-1zM112 370h1v1h-1zM113 367h1v4h-1zM114 370h1v1h-1zM115 367h1v4h-1zM116 370h1v1h-1zM117 370h1v1h-1zM118 370h1v1h-1zM119 368h1v3h-1zM120 370h1v1h-1zM121 370h1v1h-1zM122 370h1v3h-1zM123 370h1v1h-1zM124 370h1v1h-1zM125 370h1v1h-1zM126 370h1v1h-1zM127 369h1v4h-1zM128 370h1v1h-1zM129 368h1v3h-1zM130 370h1v2h-1zM131 370h1v3h-1zM132 369h1v4h-1zM133 368h1v5h-1zM134 368h1v4h-1zM135 370h1v4h-1zM136 370h1v1h-1zM137 368h1v3h-1zM138 369h1v2h-1zM139 368h1v3h-1zM140 369h1v2h-1zM141 370h1v2h-1zM142 370h1v2h-1zM143 370h1v3h-1zM144 370h1v1h-1zM145 370h1v1h-1zM146 370h1v1h-1zM147 367h1v6h-1zM148 370h1v1h-1zM149 370h1v1h-1zM150 370h1v3h-1zM151 370h1v2h-1zM152 369h1v2h-1zM153 370h1v3h-1zM154 370h1v1h-1zM155 370h1v1h-1zM156 368h1v5h-1zM157 370h1v4h-1zM158 370h1v1h-1zM159 370h1v3h-1zM160 370h1v1h-1zM161 370h1v3h-1zM162 370h1v1h-1zM163 368h1v3h-1zM164 368h1v3h-1zM165 370h1v3h-1zM166 370h1v1h-1zM167 369h1v2h-1zM168 368h1v3h-1zM169 370h1v3h-1zM170 368h1v5h-1zM171 370h1v3h-1zM172 370h1v1h-1zM173 370h1v1h-1zM174 370h1v2h-1zM175 370h1v3h-1zM176 357h1v16h-1zM177 368h1v3h-1zM178 370h1v4h-1zM179 370h1v1h-1zM180 369h1v4h-1zM181 370h1v1h-1zM182 370h1v1h-1zM183 369h1v2h-1zM184 370h1v1h-1zM185 370h1v1h-1zM186 370h1v1h-1zM187 370h1v4h-1zM188 370h1v3h-1zM189 368h1v3h-1zM190 369h1v2h-1zM191 370h1v1h-1zM192 368h1v3h-1zM193 370h1v3h-1zM194 370h1v1h-1zM195 370h1v3h-1zM196 368h1v3h-1zM197 370h1v2h-1zM198 368h1v3h-1zM199 355h1v16h-1zM200 369h1v2h-1zM201 370h1v1h-1zM202 370h1v2h-1zM203 370h1v3h-1zM204 370h1v1h-1zM205 370h1v3h-1zM206 368h1v3h-1zM207 368h1v3h-1zM208 370h1v3h-1zM209 370h1v2h-1zM210 369h1v5h-1zM211 369h1v3h-1zM212 370h1v1h-1zM213 370h1v3h-1zM214 370h1v3h-1zM215 370h1v1h-1zM216 370h1v4h-1zM217 369h1v2h-1zM218 368h1v3h-1zM219 370h1v1h-1zM220 370h1v1h-1zM221 368h1v3h-1zM222 368h1v3h-1zM223 370h1v3h-1zM224 368h1v6h-1zM225 370h1v3h-1zM226 370h1v1h-1zM227 369h1v2h-1zM228 369h1v4h-1zM229 370h1v3h-1zM230 370h1v1h-1zM231 368h1v3h-1zM232 369h1v2h-1zM233 369h1v4h-1zM234 370h1v1h-1zM235 368h1v4h-1zM236 370h1v1h-1zM237 370h1v3h-1zM238 370h1v3h-1zM239 368h1v5h-1zM240 370h1v3h-1zM241 370h1v3h-1zM242 370h1v1h-1zM243 370h1v1h-1zM244 370h1v1h-1zM245 370h1v1h-1zM246 370h1v4h-1zM247 359h1v13h-1zM248 368h1v4h-1zM249 370h1v1h-1zM250 370h1v2h-1zM251 370h1v1h-1zM252 370h1v1h-1zM253 370h1v2h-1zM254 368h1v5h-1zM255 370h1v4h-1zM256 370h1v3h-1zM257 368h1v5h-1zM258 368h1v5h-1zM259 368h1v3h-1zM260 369h1v2h-1zM261 367h1v4h-1zM262 370h1v1h-1zM263 370h1v1h-1zM264 369h1v2h-1zM265 368h1v3h-1zM266 370h1v3h-1zM267 368h1v4h-1zM268 368h1v4h-1zM269 370h1v1h-1zM270 336h1v37h-1zM271 370h1v3h-1zM272 370h1v1h-1zM273 368h1v5h-1zM274 370h1v1h-1zM275 370h1v1h-1zM276 370h1v2h-1zM277 369h1v2h-1zM278 370h1v2h-1zM279 370h1v1h-1zM280 370h1v3h-1zM281 369h1v3h-1zM282 370h1v1h-1zM283 370h1v2h-1zM284 368h1v4h-1zM285 370h1v2h-1zM286 368h1v3h-1zM287 368h1v4h-1zM288 369h1v2h-1zM289 348h1v23h-1zM290 370h1v1h-1zM291 369h1v4h-1zM292 369h1v2h-1zM293 370h1v1h-1zM294 370h1v3h-1zM295 369h1v2h-1zM296 370h1v1h-1zM297 329h1v42h-1zM298 370h1v1h-1zM299 368h1v3h-1zM300 370h1v3h-1zM301 369h1v4h-1zM302 369h1v2h-1zM303 370h1v3h-1zM304 368h1v4h-1zM305 344h1v28h-1zM306 370h1v1h-1zM307 368h1v4h-1zM308 370h1v2h-1zM309 368h1v5h-1zM310 370h1v2h-1zM311 370h1v3h-1zM312 370h1v1h-1zM313 333h1v38h-1zM314 370h1v1h-1zM315 370h1v1h-1zM316 370h1v1h-1zM317 370h1v1h-1zM318 368h1v3h-1zM319 370h1v3h-1zM320 369h1v4h-1zM321 346h1v25h-1zM322 368h1v4h-1zM323 370h1v1h-1zM324 369h1v3h-1zM325 368h1v5h-1zM326 370h1v1h-1zM327 370h1v3h-1zM328 370h1v4h-1zM329 368h1v4h-1zM330 370h1v1h-1zM331 370h1v2h-1zM332 370h1v3h-1zM333 370h1v1h-1zM334 370h1v1h-1zM335 369h1v4h-1zM336 370h1v1h-1zM337 370h1v1h-1zM338 370h1v1h-1zM339 370h1v1h-1zM340 370h1v2h-1zM341 370h1v12h-1zM342 369h1v8h-1zM343 369h1v14h-1zM344 370h1v9h-1zM345 370h1v3h-1zM346 322h1v51h-1zM347 230h1v93h-1zM348 230h1v1h-1zM349 229h1v1h-1zM350 229h1v1h-1zM351 229h1v1h-1zM352 229h1v1h-1zM353 229h1v1h-1zM354 228h1v4h-1zM355 229h1v1h-1zM356 229h1v3h-1zM357 229h1v1h-1zM358 229h1v1h-1zM359 229h1v1h-1zM360 229h1v1h-1zM361 229h1v1h-1zM362 229h1v1h-1zM363 229h1v1h-1zM364 227h1v6h-1zM365 229h1v1h-1zM366 229h1v1h-1zM367 229h1v1h-1zM368 229h1v1h-1zM369 229h1v1h-1zM370 229h1v1h-1zM371 229h1v1h-1zM372 229h1v1h-1zM373 229h1v1h-1zM374 229h1v1h-1zM375 229h1v1h-1zM376 229h1v1h-1zM377 229h1v2h-1zM378 229h1v1h-1zM379 229h1v1h-1zM380 229h1v1h-1zM381 230h1v13h-1zM382 230h1v3h-1zM383 232h1v1h-1zM384 232h1v1h-1zM385 232h1v2h-1zM386 232h1v1h-1zM387 232h1v1h-1zM388 232h1v1h-1zM389 232h1v2h-1zM390 232h1v1h-1zM391 232h1v4h-1zM392 232h1v1h-1zM393 232h1v1h-1zM394 223h1v10h-1zM395 230h1v3h-1zM396 232h1v1h-1zM397 232h1v1h-1zM398 232h1v1h-1zM399 232h1v1h-1zM400 232h1v1h-1zM401 232h1v1h-1zM402 232h1v1h-1zM403 232h1v1h-1zM404 231h1v3h-1zM405 232h1v1h-1zM406 232h1v1h-1zM407 232h1v1h-1zM408 232h1v1h-1zM409 231h1v2h-1zM410 233h1v1h-1zM411 231h1v3h-1zM412 233h1v1h-1zM413 233h1v1h-1zM414 233h1v1h-1zM415 232h1v4h-1zM416 231h1v4h-1zM417 231h1v3h-1zM418 233h1v1h-1zM419 233h1v1h-1zM420 233h1v1h-1zM421 233h1v1h-1zM422 233h1v1h-1zM423 233h1v1h-1zM424 233h1v1h-1zM425 233h1v1h-1zM426 233h1v1h-1zM427 232h1v2h-1zM428 233h1v4h-1zM429 233h1v1h-1zM430 233h1v1h-1zM431 233h1v1h-1zM432 233h1v1h-1zM433 233h1v1h-1zM434 231h1v4h-1zM435 233h1v1h-1zM436 233h1v1h-1zM437 233h1v1h-1zM438 233h1v1h-1zM439 233h1v1h-1zM440 233h1v1h-1zM441 233h1v1h-1zM442 233h1v1h-1zM443 231h1v3h-1zM444 232h1v4h-1zM445 232h1v2h-1zM446 233h1v1h-1zM447 233h1v1h-1zM448 233h1v1h-1zM449 233h1v2h-1zM450 233h1v4h-1zM451 233h1v1h-1zM452 233h1v4h-1zM453 233h1v2h-1zM454 233h1v1h-1zM455 233h1v1h-1zM456 232h1v4h-1zM457 233h1v1h-1zM458 233h1v1h-1zM459 233h1v1h-1zM460 233h1v1h-1zM461 233h1v1h-1zM462 233h1v2h-1zM463 233h1v1h-1zM464 233h1v1h-1zM465 233h1v1h-1zM466 233h1v1h-1zM467 233h1v1h-1zM468 233h1v1h-1zM469 233h1v1h-1zM470 233h1v1h-1zM471 233h1v3h-1zM472 233h1v1h-1zM473 233h1v3h-1zM474 231h1v3h-1zM475 233h1v1h-1zM476 233h1v1h-1zM477 231h1v4h-1zM478 233h1v1h-1zM479 233h1v3h-1zM480 233h1v1h-1zM481 233h1v1h-1zM482 232h1v3h-1zM483 233h1v54h-1zM484 232h1v9h-1zM485 228h1v9h-1zM486 230h1v5h-1zM487 232h1v29h-1zM488 232h1v117h-1zM489 348h1v33h-1zM490 378h1v1h-1zM491 374h1v4h-1zM492 372h1v3h-1zM493 373h1v3h-1zM494 371h1v2h-1zM495 369h1v2h-1zM496 370h1v1h-1zM497 370h1v1h-1zM498 369h1v2h-1zM499 369h1v5h-1zM500 367h1v5h-1zM501 368h1v3h-1zM502 370h1v1h-1zM503 370h1v1h-1zM504 370h1v1h-1zM505 370h1v1h-1zM506 368h1v5h-1zM507 370h1v2h-1zM508 370h1v1h-1zM509 370h1v4h-1zM510 370h1v3h-1zM511 370h1v1h-1zM512 368h1v5h-1zM513 370h1v1h-1zM514 368h1v3h-1zM515 369h1v3h-1zM516 367h1v6h-1zM517 370h1v3h-1zM518 368h1v3h-1zM519 370h1v3h-1zM520 370h1v1h-1zM521 370h1v1h-1zM522 368h1v5h-1zM523 370h1v1h-1zM524 370h1v3h-1zM525 368h1v4h-1zM526 370h1v1h-1zM527 369h1v3h-1zM528 370h1v1h-1zM529 370h1v2h-1zM530 370h1v2h-1zM531 370h1v1h-1zM532 370h1v3h-1zM533 370h1v2h-1zM534 369h1v2h-1zM535 369h1v3h-1zM536 370h1v1h-1zM537 370h1v1h-1zM538 369h1v2h-1zM539 370h1v3h-1zM540 370h1v3h-1zM541 368h1v4h-1zM542 370h1v1h-1zM543 370h1v1h-1zM544 368h1v5h-1zM545 368h1v3h-1zM546 368h1v4h-1zM547 367h1v5h-1zM548 370h1v1h-1zM549 370h1v3h-1zM550 368h1v3h-1zM551 370h1v1h-1zM552 370h1v1h-1zM553 368h1v5h-1zM554 370h1v1h-1zM555 370h1v1h-1zM556 370h1v1h-1zM557 370h1v1h-1zM558 368h1v4h-1zM559 368h1v5h-1zM560 370h1v3h-1zM561 370h1v1h-1zM562 370h1v2h-1zM563 370h1v3h-1zM564 369h1v2h-1zM565 370h1v1h-1zM566 369h1v2h-1zM567 370h1v1h-1zM568 370h1v3h-1zM569 370h1v3h-1zM570 369h1v3h-1zM571 370h1v1h-1zM572 370h1v2h-1zM573 368h1v5h-1zM574 370h1v1h-1zM575 370h1v1h-1zM576 369h1v2h-1zM577 368h1v4h-1zM578 370h1v3h-1zM579 369h1v2h-1zM580 370h1v1h-1zM581 370h1v2h-1zM582 370h1v2h-1zM583 370h1v2h-1zM584 370h1v1h-1zM585 370h1v3h-1zM586 370h1v1h-1zM587 370h1v3h-1zM588 370h1v1h-1zM589 370h1v1h-1zM590 370h1v3h-1zM591 370h1v1h-1zM592 368h1v4h-1zM593 370h1v1h-1zM594 370h1v1h-1zM595 370h1v1h-1zM596 368h1v3h-1zM597 368h1v3h-1zM598 370h1v1h-1zM599 368h1v5h-1zM600 370h1v1h-1zM601 369h1v2h-1zM602 368h1v5h-1zM603 369h1v2h-1zM604 370h1v1h-1zM605 368h1v3h-1zM606 369h1v2h-1zM607 368h1v5h-1zM608 369h1v2h-1zM609 368h1v3h-1zM610 368h1v3h-1zM611 355h1v16h-1zM612 370h1v1h-1zM613 368h1v5h-1zM614 370h1v3h-1zM615 370h1v1h-1zM616 370h1v3h-1zM617 370h1v1h-1zM618 370h1v2h-1zM619 370h1v3h-1zM620 370h1v1h-1zM621 370h1v1h-1zM622 370h1v3h-1zM623 370h1v1h-1zM624 370h1v1h-1zM625 370h1v3h-1zM626 370h1v12h-1zM627 370h1v7h-1zM628 370h1v12h-1zM629 370h1v5h-1zM630 359h1v14h-1zM631 230h1v130h-1zM632 229h1v3h-1zM633 231h1v4h-1zM634 231h1v3h-1zM635 231h1v1h-1zM636 231h1v1h-1zM637 231h1v1h-1zM638 231h1v1h-1zM639 231h1v1h-1zM640 231h1v1h-1zM641 231h1v1h-1zM642 231h1v1h-1zM643 231h1v3h-1zM644 230h1v3h-1zM645 231h1v1h-1zM646 231h1v1h-1zM647 231h1v1h-1zM648 231h1v8h-1zM649 231h1v1h-1zM650 231h1v1h-1zM651 231h1v1h-1zM652 231h1v1h-1zM653 230h1v2h-1zM654 231h1v3h-1zM655 230h1v4h-1zM656 230h1v5h-1zM657 231h1v1h-1zM658 231h1v1h-1zM659 231h1v1h-1zM660 231h1v1h-1zM661 231h1v28h-1zM662 231h1v53h-1zM663 231h1v1h-1zM664 231h1v100h-1zM665 330h1v54h-1zM666 380h1v1h-1zM667 377h1v3h-1zM668 376h1v1h-1zM669 374h1v2h-1zM670 372h1v2h-1zM671 371h1v1h-1zM672 370h1v3h-1zM673 368h1v5h-1zM674 370h1v1h-1zM675 368h1v3h-1zM676 370h1v4h-1zM677 369h1v2h-1zM678 367h1v6h-1zM679 368h1v4h-1zM680 368h1v3h-1zM681 369h1v3h-1zM682 370h1v1h-1zM683 370h1v3h-1zM684 370h1v2h-1zM685 368h1v4h-1zM686 369h1v2h-1zM687 370h1v1h-1zM688 336h1v35h-1zM689 370h1v1h-1zM690 370h1v3h-1zM691 370h1v1h-1zM692 370h1v3h-1zM693 368h1v3h-1zM694 369h1v2h-1zM695 368h1v3h-1zM696 357h1v15h-1zM697 370h1v1h-1zM698 368h1v14h-1zM699 370h1v7h-1zM700 370h1v12h-1zM701 287h1v92h-1zM702 229h1v59h-1zM703 230h1v2h-1zM704 230h1v1h-1zM705 230h1v1h-1zM706 228h1v3h-1zM707 229h1v2h-1zM708 228h1v5h-1zM709 230h1v1h-1zM710 230h1v1h-1zM711 230h1v1h-1zM712 230h1v1h-1zM713 230h1v1h-1zM714 230h1v1h-1zM715 229h1v2h-1zM716 228h1v3h-1zM717 230h1v1h-1zM718 229h1v4h-1zM719 230h1v1h-1zM720 230h1v1h-1zM721 230h1v9h-1zM722 230h1v1h-1zM723 230h1v1h-1zM724 230h1v1h-1zM725 230h1v3h-1zM726 230h1v1h-1zM727 230h1v1h-1zM728 230h1v1h-1zM729 228h1v3h-1zM730 230h1v1h-1zM731 230h1v1h-1zM732 230h1v1h-1zM733 230h1v39h-1zM734 230h1v1h-1zM735 230h1v115h-1zM736 344h1v38h-1zM737 380h1v1h-1zM738 377h1v3h-1zM739 376h1v1h-1zM740 372h1v4h-1zM741 370h1v3h-1zM742 370h1v2h-1zM743 370h1v1h-1zM744 370h1v1h-1zM745 370h1v1h-1zM746 370h1v3h-1zM747 370h1v1h-1zM748 370h1v3h-1zM749 368h1v3h-1zM750 370h1v1h-1zM751 368h1v3h-1zM752 370h1v1h-1zM753 370h1v3h-1zM754 346h1v25h-1zM755 370h1v3h-1zM756 370h1v1h-1zM757 370h1v1h-1zM758 370h1v3h-1zM759 368h1v3h-1zM760 368h1v3h-1zM761 369h1v2h-1zM762 368h1v3h-1zM763 344h1v29h-1zM764 370h1v1h-1zM765 368h1v3h-1zM766 369h1v4h-1zM767 368h1v3h-1zM768 368h1v5h-1zM769 369h1v12h-1zM770 370h1v6h-1zM771 370h1v11h-1zM772 275h1v102h-1zM773 229h1v47h-1zM774 230h1v1h-1zM775 230h1v1h-1zM776 229h1v4h-1zM777 230h1v1h-1zM778 230h1v1h-1zM779 230h1v1h-1zM780 230h1v1h-1zM781 230h1v1h-1zM782 230h1v1h-1zM783 228h1v4h-1zM784 230h1v1h-1zM785 230h1v1h-1zM786 230h1v1h-1zM787 230h1v1h-1zM788 230h1v3h-1zM789 230h1v1h-1zM790 230h1v1h-1zM791 228h1v4h-1zM792 230h1v1h-1zM793 229h1v4h-1zM794 230h1v1h-1zM795 230h1v1h-1zM796 230h1v1h-1zM797 230h1v1h-1zM798 229h1v2h-1zM799 230h1v1h-1zM800 230h1v1h-1zM801 230h1v1h-1zM802 229h1v4h-1zM803 230h1v68h-1zM804 230h1v1h-1zM805 230h1v91h-1zM806 320h1v67h-1zM807 380h1v3h-1zM808 382h1v1h-1zM809 376h1v6h-1zM810 376h1v1h-1zM811 374h1v3h-1zM812 373h1v1h-1zM813 369h1v4h-1zM814 370h1v2h-1zM815 370h1v3h-1zM816 369h1v4h-1zM817 368h1v3h-1zM818 370h1v2h-1zM819 367h1v4h-1zM820 370h1v2h-1zM821 357h1v16h-1zM822 370h1v1h-1zM823 368h1v3h-1zM824 370h1v3h-1zM825 370h1v1h-1zM826 370h1v1h-1zM827 370h1v1h-1zM828 370h1v2h-1zM829 370h1v1h-1zM830 368h1v3h-1zM831 367h1v4h-1zM832 370h1v1h-1zM833 370h1v1h-1zM834 370h1v1h-1zM835 368h1v3h-1zM836 370h1v2h-1zM837 370h1v3h-1zM838 370h1v1h-1zM839 370h1v1h-1zM840 370h1v11h-1zM841 370h1v6h-1zM842 370h1v9h-1zM843 240h1v135h-1zM844 229h1v12h-1zM845 230h1v1h-1zM846 230h1v1h-1zM847 230h1v1h-1zM848 230h1v1h-1zM849 230h1v1h-1zM850 230h1v1h-1zM851 230h1v1h-1zM852 230h1v1h-1zM853 228h1v3h-1zM854 230h1v1h-1zM855 230h1v1h-1zM856 230h1v1h-1zM857 230h1v1h-1zM858 230h1v1h-1zM859 229h1v2h-1zM860 230h1v1h-1zM861 230h1v1h-1zM862 230h1v1h-1zM863 230h1v1h-1zM864 228h1v3h-1zM865 230h1v1h-1zM866 230h1v1h-1zM867 230h1v1h-1zM868 229h1v3h-1zM869 230h1v1h-1zM870 230h1v9h-1zM871 230h1v1h-1zM872 230h1v1h-1zM873 230h1v2h-1zM874 230h1v118h-1zM875 230h1v1h-1zM876 229h1v2h-1zM877 230h1v121h-1zM878 350h1v32h-1zM879 380h1v2h-1zM880 377h1v3h-1zM881 375h1v4h-1zM882 374h1v1h-1zM883 372h1v2h-1zM884 370h1v4h-1zM885 370h1v1h-1zM886 370h1v3h-1zM887 370h1v1h-1zM888 368h1v4h-1zM889 370h1v1h-1zM890 370h1v3h-1zM891 370h1v1h-1zM892 368h1v3h-1zM893 368h1v3h-1zM894 369h1v4h-1zM895 370h1v1h-1zM896 370h1v1h-1zM897 370h1v1h-1zM898 367h1v6h-1zM899 369h1v4h-1zM900 370h1v2h-1zM901 370h1v3h-1zM902 368h1v5h-1zM903 370h1v3h-1zM904 370h1v1h-1zM905 369h1v3h-1zM906 370h1v1h-1zM907 368h1v3h-1zM908 369h1v2h-1zM909 370h1v1h-1zM910 369h1v35h-1zM911 370h1v16h-1zM912 368h1v5h-1zM913 369h1v2h-1zM914 368h1v3h-1zM915 370h1v1h-1zM916 370h1v1h-1zM917 368h1v3h-1zM918 370h1v1h-1zM919 370h1v3h-1zM920 370h1v3h-1zM921 370h1v1h-1zM922 370h1v1h-1zM923 369h1v4h-1zM924 370h1v1h-1zM925 370h1v2h-1zM926 367h1v6h-1zM927 368h1v5h-1zM928 370h1v4h-1zM929 368h1v3h-1zM930 370h1v1h-1zM931 370h1v1h-1zM932 369h1v2h-1zM933 369h1v4h-1zM934 370h1v1h-1zM935 370h1v1h-1zM936 370h1v1h-1zM937 368h1v5h-1zM938 369h1v3h-1zM939 370h1v1h-1zM940 367h1v4h-1zM941 368h1v3h-1zM942 370h1v3h-1zM943 370h1v1h-1zM944 369h1v2h-1zM945 368h1v3h-1zM946 367h1v6h-1zM947 368h1v3h-1zM948 370h1v1h-1zM949 370h1v1h-1zM950 370h1v1h-1zM951 370h1v1h-1zM952 370h1v1h-1zM953 370h1v1h-1zM954 368h1v3h-1zM955 368h1v4h-1zM956 370h1v3h-1zM957 368h1v4h-1zM958 369h1v2h-1zM959 367h1v4h-1zM960 370h1v1h-1zM961 370h1v3h-1zM962 370h1v3h-1zM963 370h1v1h-1zM964 368h1v3h-1zM965 370h1v1h-1zM966 368h1v3h-1zM967 368h1v3h-1zM968 370h1v9h-1zM969 368h1v5h-1zM970 370h1v1h-1zM971 370h1v1h-1zM972 370h1v3h-1zM973 369h1v3h-1zM974 370h1v1h-1zM975 370h1v1h-1zM976 370h1v1h-1zM977 370h1v1h-1zM978 370h1v4h-1zM979 370h1v1h-1zM980 368h1v3h-1zM981 370h1v1h-1zM982 370h1v1h-1zM983 370h1v2h-1zM984 368h1v3h-1zM985 367h1v6h-1zM986 370h1v1h-1zM987 370h1v4h-1zM988 368h1v3h-1zM989 368h1v3h-1zM990 370h1v3h-1zM991 369h1v2h-1zM992 370h1v1h-1zM993 370h1v3h-1zM994 370h1v1h-1zM995 370h1v3h-1zM996 368h1v3h-1zM997 370h1v1h-1zM998 370h1v1h-1zM999 370h1v1h-1zM1000 370h1v3h-1zM1001 370h1v4h-1zM1002 369h1v4h-1zM1003 367h1v4h-1zM1004 370h1v1h-1zM1005 370h1v3h-1zM1006 367h1v4h-1zM1007 370h1v1h-1zM1008 348h1v24h-1zM1009 360h1v11h-1zM1010 370h1v3h-1zM1011 370h1v1h-1zM1012 370h1v3h-1zM1013 370h1v1h-1zM1014 370h1v3h-1zM1015 370h1v3h-1zM1016 370h1v2h-1zM1017 370h1v3h-1zM1018 368h1v3h-1zM1019 370h1v1h-1zM1020 367h1v6h-1zM1021 367h1v14h-1zM1022 368h1v3h-1zM1023 370h1v1h-1zM1024 368h1v3h-1zM1025 370h1v1h-1zM1026 368h1v3h-1zM1027 370h1v1h-1zM1028 368h1v5h-1zM1029 370h1v2h-1zM1030 369h1v5h-1zM1031 368h1v3h-1zM1032 369h1v2h-1zM1033 370h1v3h-1zM1034 370h1v1h-1zM1035 370h1v1h-1zM1036 370h1v1h-1zM1037 351h1v21h-1zM1038 362h1v9h-1zM1039 370h1v2h-1zM1040 370h1v1h-1zM1041 370h1v1h-1zM1042 370h1v2h-1zM1043 370h1v1h-1zM1044 370h1v3h-1zM1045 367h1v4h-1zM1046 370h1v3h-1zM1047 370h1v1h-1z"/>
 <path fill="#00f000" d="M29 482h1v3h-1zM30 484h1v1h-1zM31 482h1v6h-1zM32 482h1v6h-1zM33 484h1v3h-1zM34 484h1v3h-1zM35 471h1v19h-1zM36 484h1v1h-1zM37 483h1v5h-1zM38 482h1v3h-1zM39 484h1v1h-1zM40 484h1v1h-1zM41 484h1v1h-1zM42 482h1v3h-1zM43 484h1v1h-1zM44 484h1v6h-1zM45 481h1v9h-1zM46 482h1v5h-1zM47 484h1v1h-1zM48 484h1v1h-1zM49 484h1v1h-1zM50 482h1v3h-1zM51 484h1v3h-1zM52 482h1v3h-1zM53 482h1v8h-1zM54 484h1v4h-1zM55 482h1v3h-1zM56 482h1v6h-1zM57 482h1v6h-1zM58 483h1v2h-1zM59 484h1v4h-1zM60 484h1v1h-1zM61 483h1v4h-1zM62 484h1v1h-1zM63 484h1v3h-1zM64 484h1v1h-1zM65 484h1v1h-1zM66 482h1v3h-1zM67 484h1v1h-1zM68 482h1v3h-1zM69 484h1v1h-1zM70 482h1v3h-1zM71 484h1v1h-1zM72 481h1v4h-1zM73 481h1v7h-1zM74 482h1v3h-1zM75 482h1v6h-1zM76 483h1v2h-1zM77 484h1v1h-1zM78 483h1v7h-1zM79 481h1v6h-1zM80 483h1v2h-1zM81 482h1v6h-1zM82 482h1v3h-1zM83 483h1v7h-1zM84 481h1v4h-1zM85 483h1v5h-1zM86 484h1v1h-1zM87 484h1v1h-1zM88 484h1v4h-1zM89 483h1v2h-1zM90 484h1v1h-1zM91 482h1v3h-1zM92 484h1v4h-1zM93 484h1v4h-1zM94 482h1v6h-1zM95 482h1v6h-1zM96 483h1v5h-1zM97 482h1v3h-1zM98 484h1v2h-1zM99 484h1v3h-1zM100 484h1v1h-1zM101 481h1v7h-1zM102 484h1v3h-1zM103 484h1v3h-1zM104 484h1v3h-1zM105 482h1v6h-1zM106 483h1v4h-1zM107 481h1v9h-1zM108 484h1v1h-1zM109 483h1v2h-1zM110 482h1v3h-1zM111 482h1v3h-1zM112 484h1v3h-1zM113 483h1v5h-1zM114 484h1v3h-1zM115 484h1v4h-1zM116 481h1v4h-1zM117 482h1v3h-1zM118 484h1v1h-1zM119 484h1v1h-1zM120 484h1v1h-1zM121 484h1v1h-1zM122 484h1v3h-1zM123 482h1v3h-1zM124 484h1v1h-1zM125 482h1v3h-1zM126 482h1v5h-1zM127 483h1v3h-1zM128 484h1v3h-1zM129 484h1v1h-1zM130 484h1v1h-1zM131 484h1v1h-1zM132 484h1v1h-1zM133 482h1v3h-1zM134 482h1v6h-1zM135 484h1v1h-1zM136 482h1v3h-1zM137 484h1v2h-1zM138 483h1v5h-1zM139 481h1v4h-1zM140 482h1v3h-1zM141 484h1v6h-1zM142 484h1v1h-1zM143 484h1v4h-1zM144 484h1v1h-1zM145 484h1v3h-1zM146 484h1v1h-1zM147 482h1v3h-1zM148 483h1v2h-1zM149 482h1v5h-1zM150 484h1v4h-1zM151 484h1v1h-1zM152 484h1v1h-1zM153 482h1v3h-1zM154 484h1v6h-1zM155 484h1v2h-1zM156 484h1v3h-1zM157 484h1v3h-1zM158 483h1v2h-1zM159 484h1v4h-1zM160 484h1v1h-1zM161 482h1v3h-1zM162 483h1v7h-1zM163 484h1v4h-1zM164 482h1v4h-1zM165 484h1v6h-1zM166 484h1v1h-1zM167 482h1v3h-1zM168 484h1v1h-1zM169 484h1v1h-1zM170 484h1v1h-1zM171 484h1v4h-1zM172 482h1v3h-1zM173 484h1v2h-1zM174 484h1v1h-1zM175 484h1v1h-1zM176 484h1v17h-1zM177 484h1v1h-1zM178 484h1v6h-1zM179 484h1v6h-1zM180 484h1v4h-1zM181 484h1v1h-1zM182 484h1v4h-1zM183 483h1v2h-1zM184 484h1v1h-1zM185 484h1v1h-1zM186 484h1v6h-1zM187 484h1v1h-1zM188 483h1v4h-1zM189 482h1v6h-1zM190 482h1v3h-1zM191 482h1v3h-1zM192 482h1v5h-1zM193 484h1v3h-1zM194 482h1v5h-1zM195 483h1v5h-1zM196 482h1v5h-1zM197 483h1v2h-1zM198 483h1v5h-1zM199 471h1v14h-1zM200 484h1v12h-1zM201 484h1v1h-1zM202 484h1v3h-1zM203 483h1v2h-1zM204 484h1v1h-1zM205 484h1v3h-1zM206 484h1v6h-1zM207 484h1v4h-1zM208 482h1v3h-1zM209 484h1v1h-1zM210 482h1v3h-1zM211 482h1v3h-1zM212 482h1v3h-1zM213 484h1v4h-1zM214 484h1v3h-1zM215 482h1v5h-1zM216 484h1v3h-1zM217 484h1v1h-1zM218 484h1v1h-1zM219 482h1v6h-1zM220 481h1v5h-1zM221 484h1v3h-1zM222 482h1v3h-1zM223 484h1v6h-1zM224 484h1v3h-1zM225 483h1v2h-1zM226 482h1v5h-1zM227 484h1v2h-1zM228 481h1v4h-1zM229 484h1v3h-1zM230 484h1v1h-1zM231 484h1v1h-1zM232 484h1v1h-1zM233 484h1v1h-1zM234 484h1v1h-1zM235 484h1v4h-1zM236 483h1v2h-1zM237 481h1v9h-1zM238 482h1v3h-1zM239 484h1v1h-1zM240 484h1v1h-1zM241 484h1v6h-1zM242 484h1v1h-1zM243 484h1v1h-1zM244 484h1v1h-1zM245 484h1v3h-1zM246 482h1v14h-1zM247 484h1v1h-1zM248 483h1v5h-1zM249 484h1v6h-1zM250 484h1v3h-1zM251 484h1v6h-1zM252 484h1v2h-1zM253 484h1v1h-1zM254 484h1v1h-1zM255 484h1v2h-1zM256 484h1v6h-1zM257 484h1v1h-1zM258 471h1v14h-1zM259 482h1v3h-1zM260 482h1v3h-1zM261 484h1v6h-1zM262 484h1v1h-1zM263 484h1v2h-1zM264 484h1v1h-1zM265 482h1v5h-1zM266 484h1v1h-1zM267 484h1v6h-1zM268 483h1v2h-1zM269 482h1v39h-1zM270 484h1v1h-1zM271 482h1v3h-1zM272 484h1v2h-1zM273 484h1v4h-1zM274 484h1v1h-1zM275 484h1v1h-1zM276 484h1v4h-1zM277 484h1v3h-1zM278 484h1v2h-1zM279 484h1v3h-1zM280 484h1v2h-1zM281 483h1v2h-1zM282 484h1v1h-1zM283 484h1v1h-1zM284 482h1v3h-1zM285 484h1v3h-1zM286 482h1v6h-1zM287 484h1v1h-1zM288 484h1v1h-1zM289 483h1v26h-1zM290 484h1v3h-1zM291 484h1v4h-1zM292 482h1v8h-1zM293 484h1v3h-1zM294 484h1v4h-1zM295 484h1v1h-1zM296 482h1v3h-1zM297 484h1v45h-1zM298 482h1v3h-1zM299 484h1v1h-1zM300 483h1v2h-1zM301 484h1v6h-1zM302 482h1v8h-1zM303 484h1v4h-1zM304 482h1v3h-1zM305 484h1v35h-1zM306 484h1v3h-1zM307 481h1v4h-1zM308 484h1v1h-1zM309 482h1v3h-1zM310 484h1v6h-1zM311 484h1v6h-1zM312 484h1v1h-1zM313 481h1v42h-1zM314 481h1v4h-1zM315 484h1v1h-1zM316 484h1v1h-1zM317 484h1v3h-1zM318 484h1v2h-1zM319 484h1v1h-1zM320 482h1v3h-1zM321 484h1v22h-1zM322 482h1v3h-1zM323 484h1v2h-1zM324 482h1v3h-1zM325 484h1v1h-1zM326 484h1v2h-1zM327 484h1v3h-1zM328 482h1v3h-1zM329 484h1v2h-1zM330 484h1v2h-1zM331 482h1v6h-1zM332 484h1v1h-1zM333 484h1v6h-1zM334 484h1v3h-1zM335 484h1v2h-1zM336 482h1v3h-1zM337 483h1v1h-1zM338 480h1v3h-1zM339 482h1v3h-1zM340 479h1v3h-1zM341 479h1v4h-1zM342 472h1v8h-1zM343 476h1v4h-1zM344 478h1v3h-1zM345 480h1v55h-1zM346 534h1v94h-1zM347 627h1v5h-1zM348 626h1v5h-1zM349 628h1v6h-1zM350 626h1v3h-1zM351 627h1v7h-1zM352 628h1v1h-1zM353 626h1v3h-1zM354 626h1v5h-1zM355 614h1v17h-1zM356 626h1v3h-1zM357 628h1v3h-1zM358 628h1v3h-1zM359 628h1v1h-1zM360 629h1v6h-1zM361 629h1v4h-1zM362 629h1v3h-1zM363 627h1v3h-1zM364 629h1v2h-1zM365 627h1v3h-1zM366 626h1v4h-1zM367 629h1v1h-1zM368 626h1v4h-1zM369 629h1v1h-1zM370 629h1v3h-1zM371 627h1v3h-1zM372 629h1v1h-1zM373 629h1v3h-1zM374 629h1v3h-1zM375 629h1v4h-1zM376 629h1v1h-1zM377 627h1v3h-1zM378 629h1v6h-1zM379 629h1v4h-1zM380 627h1v6h-1zM381 629h1v1h-1zM382 630h1v4h-1zM383 627h1v4h-1zM384 628h1v5h-1zM385 628h1v5h-1zM386 628h1v6h-1zM387 630h1v1h-1zM388 628h1v6h-1zM389 630h1v2h-1zM390 628h1v3h-1zM391 630h1v4h-1zM392 630h1v2h-1zM393 628h1v5h-1zM394 616h1v16h-1zM395 630h1v2h-1zM396 630h1v3h-1zM397 628h1v3h-1zM398 630h1v1h-1zM399 627h1v4h-1zM400 630h1v3h-1zM401 630h1v1h-1zM402 630h1v1h-1zM403 630h1v4h-1zM404 630h1v1h-1zM405 629h1v3h-1zM406 631h1v1h-1zM407 631h1v1h-1zM408 631h1v6h-1zM409 628h1v4h-1zM410 631h1v1h-1zM411 631h1v1h-1zM412 631h1v4h-1zM413 629h1v5h-1zM414 631h1v1h-1zM415 629h1v5h-1zM416 631h1v1h-1zM417 631h1v1h-1zM418 629h1v8h-1zM419 631h1v4h-1zM420 631h1v2h-1zM421 631h1v1h-1zM422 631h1v1h-1zM423 631h1v4h-1zM424 631h1v1h-1zM425 630h1v7h-1zM426 631h1v4h-1zM427 630h1v3h-1zM428 630h1v3h-1zM429 631h1v7h-1zM430 632h1v2h-1zM431 630h1v3h-1zM432 632h1v1h-1zM433 630h1v6h-1zM434 632h1v1h-1zM435 632h1v1h-1zM436 630h1v6h-1zM437 632h1v1h-1zM438 632h1v1h-1zM439 632h1v1h-1zM440 630h1v5h-1zM441 632h1v4h-1zM442 632h1v2h-1zM443 632h1v4h-1zM444 632h1v1h-1zM445 629h1v6h-1zM446 632h1v4h-1zM447 631h1v4h-1zM448 631h1v2h-1zM449 630h1v3h-1zM450 633h1v1h-1zM451 633h1v4h-1zM452 631h1v3h-1zM453 633h1v1h-1zM454 633h1v3h-1zM455 633h1v1h-1zM456 633h1v4h-1zM457 633h1v2h-1zM458 633h1v4h-1zM459 633h1v3h-1zM460 633h1v4h-1zM461 633h1v6h-1zM462 631h1v5h-1zM463 633h1v1h-1zM464 633h1v3h-1zM465 633h1v3h-1zM466 631h1v3h-1zM467 630h1v6h-1zM468 633h1v1h-1zM469 633h1v1h-1zM470 633h1v4h-1zM471 631h1v3h-1zM472 634h1v1h-1zM473 634h1v4h-1zM474 634h1v1h-1zM475 634h1v1h-1zM476 632h1v5h-1zM477 633h1v2h-1zM478 634h1v1h-1zM479 634h1v1h-1zM480 634h1v6h-1zM481 632h1v3h-1zM482 634h1v1h-1zM483 634h1v1h-1zM484 599h1v36h-1zM485 632h1v11h-1zM486 626h1v15h-1zM487 630h1v6h-1zM488 516h1v117h-1zM489 474h1v43h-1zM490 476h1v2h-1zM491 478h1v1h-1zM492 479h1v6h-1zM493 478h1v5h-1zM494 480h1v1h-1zM495 481h1v1h-1zM496 480h1v5h-1zM497 483h1v6h-1zM498 484h1v1h-1zM499 484h1v4h-1zM500 484h1v1h-1zM501 484h1v1h-1zM502 484h1v1h-1zM503 483h1v2h-1zM504 482h1v3h-1zM505 484h1v1h-1zM506 482h1v4h-1zM507 484h1v6h-1zM508 484h1v6h-1zM509 482h1v4h-1zM510 484h1v3h-1zM511 484h1v1h-1zM512 484h1v4h-1zM513 481h1v6h-1zM514 484h1v3h-1zM515 482h1v3h-1zM516 484h1v1h-1zM517 482h1v5h-1zM518 484h1v1h-1zM519 482h1v3h-1zM520 484h1v1h-1zM521 482h1v8h-1zM522 482h1v5h-1zM523 483h1v2h-1zM524 482h1v3h-1zM525 482h1v3h-1zM526 483h1v2h-1zM527 484h1v1h-1zM528 484h1v2h-1zM529 483h1v5h-1zM530 483h1v2h-1zM531 482h1v3h-1zM532 484h1v1h-1zM533 484h1v1h-1zM534 484h1v1h-1zM535 482h1v3h-1zM536 484h1v1h-1zM537 482h1v3h-1zM538 484h1v1h-1zM539 484h1v1h-1zM540 484h1v2h-1zM541 484h1v3h-1zM542 482h1v6h-1zM543 484h1v1h-1zM544 484h1v3h-1zM545 484h1v1h-1zM546 482h1v3h-1zM547 484h1v4h-1zM548 484h1v6h-1zM549 484h1v1h-1zM550 484h1v4h-1zM551 483h1v7h-1zM552 484h1v4h-1zM553 484h1v2h-1zM554 482h1v3h-1zM555 484h1v1h-1zM556 482h1v6h-1zM557 484h1v4h-1zM558 482h1v3h-1zM559 481h1v4h-1zM560 484h1v1h-1zM561 484h1v1h-1zM562 484h1v4h-1zM563 484h1v3h-1zM564 482h1v3h-1zM565 482h1v3h-1zM566 484h1v3h-1zM567 484h1v3h-1zM568 484h1v4h-1zM569 484h1v3h-1zM570 484h1v1h-1zM571 482h1v3h-1zM572 482h1v4h-1zM573 483h1v2h-1zM574 484h1v1h-1zM575 484h1v1h-1zM576 482h1v5h-1zM577 482h1v3h-1zM578 484h1v3h-1zM579 483h1v2h-1zM580 484h1v4h-1zM581 484h1v2h-1zM582 484h1v3h-1zM583 484h1v3h-1zM584 484h1v4h-1zM585 484h1v1h-1zM586 484h1v1h-1zM587 484h1v4h-1zM588 482h1v3h-1zM589 484h1v3h-1zM590 484h1v4h-1zM591 484h1v1h-1zM592 484h1v3h-1zM593 482h1v6h-1zM594 484h1v1h-1zM595 484h1v1h-1zM596 484h1v1h-1zM597 484h1v1h-1zM598 484h1v1h-1zM599 484h1v6h-1zM600 481h1v6h-1zM601 484h1v4h-1zM602 482h1v3h-1zM603 484h1v1h-1zM604 484h1v1h-1zM605 484h1v1h-1zM606 484h1v1h-1zM607 482h1v3h-1zM608 483h1v2h-1zM609 483h1v2h-1zM610 482h1v5h-1zM611 484h1v24h-1zM612 484h1v3h-1zM613 482h1v6h-1zM614 484h1v1h-1zM615 481h1v4h-1zM616 483h1v4h-1zM617 484h1v1h-1zM618 484h1v1h-1zM619 481h1v4h-1zM620 484h1v3h-1zM621 481h1v9h-1zM622 483h1v1h-1zM623 480h1v5h-1zM624 480h1v5h-1zM625 481h1v1h-1zM626 474h1v9h-1zM627 478h1v3h-1zM628 477h1v6h-1zM629 478h1v1h-1zM630 479h1v152h-1zM631 626h1v7h-1zM632 625h1v4h-1zM633 626h1v1h-1zM634 626h1v2h-1zM635 626h1v3h-1zM636 629h1v2h-1zM637 629h1v2h-1zM638 628h1v3h-1zM639 630h1v4h-1zM640 628h1v3h-1zM641 627h1v9h-1zM642 630h1v1h-1zM643 628h1v6h-1zM644 630h1v6h-1zM645 630h1v4h-1zM646 629h1v5h-1zM647 630h1v1h-1zM648 630h1v1h-1zM649 630h1v3h-1zM650 630h1v2h-1zM651 627h1v6h-1zM652 630h1v3h-1zM653 627h1v5h-1zM654 628h1v3h-1zM655 630h1v1h-1zM656 630h1v1h-1zM657 628h1v3h-1zM658 630h1v1h-1zM659 630h1v1h-1zM660 630h1v2h-1zM661 630h1v1h-1zM662 592h1v39h-1zM663 630h1v13h-1zM664 526h1v117h-1zM665 476h1v51h-1zM666 477h1v2h-1zM667 478h1v1h-1zM668 479h1v4h-1zM669 480h1v1h-1zM670 479h1v3h-1zM671 482h1v1h-1zM672 483h1v1h-1zM673 484h1v1h-1zM674 471h1v17h-1zM675 484h1v1h-1zM676 482h1v8h-1zM677 484h1v1h-1zM678 482h1v3h-1zM679 482h1v3h-1zM680 482h1v3h-1zM681 484h1v1h-1zM682 482h1v6h-1zM683 484h1v6h-1zM684 484h1v1h-1zM685 484h1v1h-1zM686 484h1v1h-1zM687 484h1v3h-1zM688 482h1v37h-1zM689 482h1v3h-1zM690 484h1v4h-1zM691 483h1v2h-1zM692 484h1v3h-1zM693 484h1v3h-1zM694 482h1v3h-1zM695 483h1v4h-1zM696 480h1v18h-1zM697 480h1v6h-1zM698 474h1v8h-1zM699 478h1v4h-1zM700 480h1v1h-1zM701 477h1v4h-1zM702 481h1v91h-1zM703 571h1v55h-1zM704 624h1v4h-1zM705 624h1v3h-1zM706 625h1v3h-1zM707 628h1v6h-1zM708 629h1v2h-1zM709 630h1v4h-1zM710 630h1v4h-1zM711 630h1v1h-1zM712 630h1v1h-1zM713 630h1v1h-1zM714 630h1v2h-1zM715 630h1v4h-1zM716 627h1v4h-1zM717 630h1v3h-1zM718 630h1v2h-1zM719 629h1v2h-1zM720 628h1v3h-1zM721 629h1v18h-1zM722 630h1v1h-1zM723 630h1v1h-1zM724 628h1v3h-1zM725 629h1v7h-1zM726 629h1v2h-1zM727 630h1v6h-1zM728 630h1v4h-1zM729 630h1v1h-1zM730 629h1v2h-1zM731 627h1v4h-1zM732 630h1v4h-1zM733 571h1v65h-1zM734 628h1v3h-1zM735 516h1v117h-1zM736 474h1v43h-1zM737 476h1v1h-1zM738 477h1v1h-1zM739 478h1v1h-1zM740 479h1v1h-1zM741 479h1v3h-1zM742 482h1v4h-1zM743 483h1v1h-1zM744 484h1v4h-1zM745 484h1v1h-1zM746 484h1v1h-1zM747 482h1v3h-1zM748 484h1v6h-1zM749 484h1v4h-1zM750 484h1v6h-1zM751 484h1v1h-1zM752 484h1v1h-1zM753 482h1v3h-1zM754 484h1v3h-1zM755 484h1v37h-1zM756 484h1v1h-1zM757 482h1v3h-1zM758 484h1v4h-1zM759 484h1v1h-1zM760 484h1v1h-1zM761 484h1v1h-1zM762 484h1v1h-1zM763 482h1v34h-1zM764 482h1v3h-1zM765 484h1v4h-1zM766 483h1v1h-1zM767 482h1v4h-1zM768 481h1v1h-1zM769 478h1v8h-1zM770 476h1v10h-1zM771 479h1v4h-1zM772 478h1v4h-1zM773 482h1v104h-1zM774 585h1v43h-1zM775 623h1v3h-1zM776 626h1v3h-1zM777 627h1v2h-1zM778 628h1v1h-1zM779 628h1v2h-1zM780 628h1v3h-1zM781 628h1v3h-1zM782 628h1v3h-1zM783 630h1v1h-1zM784 627h1v4h-1zM785 630h1v1h-1zM786 629h1v7h-1zM787 628h1v3h-1zM788 630h1v1h-1zM789 630h1v4h-1zM790 628h1v3h-1zM791 628h1v3h-1zM792 630h1v1h-1zM793 630h1v2h-1zM794 627h1v9h-1zM795 630h1v3h-1zM796 630h1v4h-1zM797 630h1v4h-1zM798 628h1v3h-1zM799 630h1v4h-1zM800 630h1v3h-1zM801 627h1v9h-1zM802 628h1v3h-1zM803 579h1v55h-1zM804 628h1v5h-1zM805 630h1v6h-1zM806 510h1v123h-1zM807 474h1v37h-1zM808 476h1v3h-1zM809 475h1v5h-1zM810 478h1v4h-1zM811 479h1v4h-1zM812 481h1v4h-1zM813 482h1v1h-1zM814 483h1v1h-1zM815 484h1v1h-1zM816 484h1v1h-1zM817 481h1v9h-1zM818 484h1v1h-1zM819 484h1v4h-1zM820 484h1v1h-1zM821 482h1v19h-1zM822 484h1v1h-1zM823 484h1v1h-1zM824 484h1v1h-1zM825 484h1v3h-1zM826 484h1v3h-1zM827 484h1v4h-1zM828 484h1v4h-1zM829 482h1v3h-1zM830 484h1v1h-1zM831 482h1v5h-1zM832 484h1v6h-1zM833 484h1v1h-1zM834 482h1v6h-1zM835 484h1v1h-1zM836 484h1v3h-1zM837 483h1v1h-1zM838 482h1v1h-1zM839 481h1v4h-1zM840 474h1v7h-1zM841 478h1v3h-1zM842 477h1v3h-1zM843 478h1v6h-1zM844 484h1v112h-1zM845 595h1v33h-1zM846 625h1v4h-1zM847 626h1v1h-1zM848 626h1v2h-1zM849 628h1v4h-1zM850 629h1v1h-1zM851 630h1v1h-1zM852 630h1v4h-1zM853 630h1v2h-1zM854 629h1v2h-1zM855 630h1v1h-1zM856 630h1v1h-1zM857 630h1v4h-1zM858 630h1v3h-1zM859 630h1v1h-1zM860 630h1v1h-1zM861 630h1v4h-1zM862 630h1v1h-1zM863 630h1v1h-1zM864 630h1v1h-1zM865 630h1v1h-1zM866 628h1v3h-1zM867 630h1v6h-1zM868 630h1v1h-1zM869 630h1v1h-1zM870 628h1v3h-1zM871 628h1v3h-1zM872 628h1v4h-1zM873 630h1v6h-1zM874 521h1v110h-1zM875 630h1v1h-1zM876 628h1v6h-1zM877 541h1v92h-1zM878 456h1v86h-1zM879 464h1v3h-1zM880 464h1v13h-1zM881 467h1v1h-1zM882 467h1v8h-1zM883 467h1v5h-1zM884 472h1v1h-1zM885 473h1v1h-1zM886 473h1v3h-1zM887 476h1v1h-1zM888 476h1v3h-1zM889 477h1v4h-1zM890 481h1v4h-1zM891 479h1v6h-1zM892 484h1v2h-1zM893 482h1v3h-1zM894 482h1v3h-1zM895 484h1v4h-1zM896 471h1v16h-1zM897 484h1v1h-1zM898 484h1v2h-1zM899 482h1v5h-1zM900 484h1v2h-1zM901 484h1v1h-1zM902 484h1v4h-1zM903 484h1v3h-1zM904 484h1v1h-1zM905 484h1v4h-1zM906 484h1v4h-1zM907 484h1v1h-1zM908 482h1v3h-1zM909 482h1v5h-1zM910 484h1v39h-1zM911 484h1v1h-1zM912 484h1v4h-1zM913 484h1v1h-1zM914 482h1v6h-1zM915 484h1v1h-1zM916 483h1v4h-1zM917 484h1v3h-1zM918 484h1v1h-1zM919 482h1v6h-1zM920 484h1v3h-1zM921 482h1v3h-1zM922 484h1v1h-1zM923 484h1v3h-1zM924 484h1v1h-1zM925 482h1v6h-1zM926 484h1v1h-1zM927 484h1v6h-1zM928 484h1v1h-1zM929 484h1v1h-1zM930 482h1v3h-1zM931 483h1v2h-1zM932 484h1v1h-1zM933 482h1v3h-1zM934 484h1v4h-1zM935 484h1v1h-1zM936 484h1v1h-1zM937 484h1v6h-1zM938 484h1v4h-1zM939 481h1v4h-1zM940 482h1v4h-1zM941 483h1v3h-1zM942 484h1v2h-1zM943 484h1v6h-1zM944 484h1v4h-1zM945 484h1v1h-1zM946 484h1v1h-1zM947 482h1v3h-1zM948 484h1v1h-1zM949 484h1v1h-1zM950 484h1v1h-1zM951 484h1v1h-1zM952 482h1v3h-1zM953 484h1v4h-1zM954 482h1v3h-1zM955 484h1v6h-1zM956 482h1v5h-1zM957 484h1v4h-1zM958 483h1v2h-1zM959 484h1v2h-1zM960 484h1v2h-1zM961 482h1v5h-1zM962 484h1v4h-1zM963 484h1v3h-1zM964 484h1v1h-1zM965 481h1v6h-1zM966 484h1v1h-1zM967 484h1v1h-1zM968 481h1v4h-1zM969 484h1v6h-1zM970 484h1v6h-1zM971 484h1v6h-1zM972 484h1v1h-1zM973 484h1v1h-1zM974 482h1v6h-1zM975 484h1v1h-1zM976 482h1v6h-1zM977 484h1v3h-1zM978 484h1v1h-1zM979 482h1v3h-1zM980 482h1v5h-1zM981 484h1v4h-1zM982 484h1v1h-1zM983 484h1v1h-1zM984 484h1v4h-1zM985 484h1v1h-1zM986 484h1v4h-1zM987 484h1v1h-1zM988 484h1v4h-1zM989 484h1v1h-1zM990 484h1v3h-1zM991 484h1v3h-1zM992 484h1v1h-1zM993 484h1v6h-1zM994 484h1v2h-1zM995 471h1v19h-1zM996 484h1v1h-1zM997 484h1v1h-1zM998 484h1v2h-1zM999 484h1v2h-1zM1000 483h1v2h-1zM1001 483h1v2h-1zM1002 484h1v1h-1zM1003 484h1v1h-1zM1004 484h1v3h-1zM1005 484h1v4h-1zM1006 482h1v8h-1zM1007 481h1v7h-1zM1008 483h1v27h-1zM1009 484h1v4h-1zM1010 484h1v1h-1zM1011 482h1v3h-1zM1012 484h1v2h-1zM1013 482h1v4h-1zM1014 484h1v1h-1zM1015 484h1v1h-1zM1016 484h1v1h-1zM1017 483h1v4h-1zM1018 482h1v3h-1zM1019 482h1v3h-1zM1020 483h1v2h-1zM1021 482h1v5h-1zM1022 484h1v2h-1zM1023 482h1v3h-1zM1024 484h1v2h-1zM1025 482h1v3h-1zM1026 482h1v3h-1zM1027 482h1v6h-1zM1028 484h1v2h-1zM1029 484h1v3h-1zM1030 484h1v1h-1zM1031 484h1v1h-1zM1032 482h1v8h-1zM1033 482h1v3h-1zM1034 483h1v4h-1zM1035 484h1v1h-1zM1036 484h1v1h-1zM1037 484h1v22h-1zM1038 484h1v1h-1zM1039 482h1v4h-1zM1040 482h1v3h-1zM1041 484h1v4h-1zM1042 482h1v3h-1zM1043 482h1v5h-1zM1044 484h1v1h-1zM1045 482h1v3h-1zM1046 484h1v6h-1zM1047 484h1v1h-1z"/>
</svg>

<!-- markers -->
<svg class="a" style="left:7px;top:289px" width="20" height="14"><path d="M1 0.5H13L19 6.5L13 12.5H1Z" fill="#ff0" stroke="#1a1a3a" stroke-width="0.8"/><path d="M6.5 4L9 2.5V11" fill="none" stroke="#000" stroke-width="1.8"/></svg>
<svg class="a" style="left:7px;top:543px" width="20" height="14"><path d="M1 0.5H13L19 6.5L13 12.5H1Z" fill="#0f0" stroke="#2a1a2a" stroke-width="0.8"/><path d="M6 4Q6.5 2 9 2Q11.5 2.3 11 4.5L6.5 10.5H12" fill="none" stroke="#000" stroke-width="1.6"/></svg>
<svg class="a" style="left:1051px;top:289px" width="19" height="14"><path d="M18 0.5H6.5L0.8 6.5L6.5 12.5H18" fill="#ff0" stroke="#1a1a3a" stroke-width="0.8"/><rect x="17.5" y="0.9" width="0.6" height="11.2" fill="#ff0"/><path d="M8.5 3.5H15M11.7 3.5V11" fill="none" stroke="#000" stroke-width="1.2"/></svg>

<!-- bottom info -->
<div class="ibox" style="left:27px;top:711px;width:92px;height:19px"></div>
<div class="t" style="left:29px;top:714px;color:#ff0">CH1</div>
<svg class="a" style="left:57px;top:718px" width="11" height="7"><path d="M0 5.5H11" stroke="#ff0" stroke-width="1.2"/><path d="M0.5 1.5h1.4M4.5 1.5h1.4M8.5 1.5h1.4" stroke="#ff0" stroke-width="1.2"/></svg>
<div class="t" style="left:78px;top:714px;color:#ff0">1.00V</div>
<div class="ibox" style="left:167px;top:711px;width:92px;height:19px"></div>
<div class="t" style="left:169px;top:714px;color:#0f0">CH2</div>
<svg class="a" style="left:197px;top:718px" width="11" height="7"><path d="M0 5.5H11" stroke="#0f0" stroke-width="1.2"/><path d="M0.5 1.5h1.4M4.5 1.5h1.4M8.5 1.5h1.4" stroke="#0f0" stroke-width="1.2"/></svg>
<div class="t" style="left:218px;top:714px;color:#0f0">1.00V</div>
<div class="ibox" style="left:840px;top:711px;width:209px;height:19px"></div>
<div class="t" style="left:842px;top:714px;color:#ff8c00;letter-spacing:0.2px">Time: 200.0us</div>
<div class="t" style="left:939px;top:714px;color:#ff8c00">Sample Rate: 1MHz</div>

<!-- Control panel -->
<div class="a" style="left:1076px;top:81px;width:4px;height:657px;background:#f4f6fc"></div>
<div class="a" style="left:1080px;top:81px;width:200px;height:19px;background:linear-gradient(#c2d0de,#d6e2ee)"></div>
<div class="a" style="left:1080px;top:100px;width:200px;height:1px;background:#eef2f8"></div>
<div class="t" style="left:1084px;top:84px;font-size:12px;color:#000">Control Panel</div>
<svg class="a" style="left:1249px;top:86px" width="28" height="10">
 <path d="M2.5 1.5h4v5h-4z" fill="none" stroke="#000" stroke-width="1.3"/><path d="M0.5 6.5h8M4.5 6.5v3" stroke="#000" stroke-width="1.3"/>
 <path d="M17 1L24 8M24 1L17 8" stroke="#000" stroke-width="1.8"/>
</svg>
<div class="cb" style="left:1080px;top:101px;width:200px;height:23px"><span style="left:4px;top:4px">Scope</span><i style="right:4px;top:9px"></i></div>
<div class="a" style="left:1080px;top:124px;width:200px;height:24px;background:linear-gradient(#f4f6fb 0px,#f1f3f9 6px,#d9dce9 15px,#bfc2d5 22px,#b6b9cd 24px)"></div>
<div class="a" style="left:1080px;top:148px;width:184px;height:574px;background:#f0f0f0"></div>

<!-- scrollbar v -->
<div class="a" style="left:1264px;top:148px;width:16px;height:574px;background:#f0f0f0"></div>
<svg class="a" style="left:1264px;top:150px" width="16" height="572">
 <path d="M4.5 9L8 5.5L11.5 9" fill="none" stroke="#505050" stroke-width="1.9"/>
 <rect x="1" y="15" width="14" height="399" fill="#cdcdcd"/>
 <path d="M4.5 561L8 564.5L11.5 561" fill="none" stroke="#505050" stroke-width="1.9"/>
</svg>
<!-- scrollbar h -->
<div class="a" style="left:1080px;top:722px;width:184px;height:16px;background:#f0f0f0"></div>
<svg class="a" style="left:1080px;top:722px" width="184" height="16">
 <path d="M10 4.5L6.5 8L10 11.5" fill="none" stroke="#505050" stroke-width="1.9"/>
 <rect x="17" y="1" width="127" height="14" fill="#cdcdcd"/>
 <path d="M173 4.5L176.5 8L173 11.5" fill="none" stroke="#505050" stroke-width="1.9"/>
</svg>

<!-- Horizontal group -->
<div class="grp" style="left:1085px;top:160px;width:190px;height:118px"></div>
<div class="gl" style="left:1161px;top:154px">Horizontal</div>
<div class="t" style="left:1095px;top:174px">Time/DIV</div>
<div class="cb" style="left:1094px;top:192px;width:74px"><span>200.0us</span><i></i></div>
<div class="t" style="left:1095px;top:224px">Format</div>
<div class="cb" style="left:1094px;top:244px;width:74px"><span>Y-T</span><i></i></div>
<svg class="a" style="left:1188.5px;top:185.4px" width="80" height="80" viewBox="1188.5 185.4 80 80"><path d="M1203.96 249.94 A34.7 34.7 0 1 1 1253.04 249.94" fill="none" stroke="#fff" stroke-width="2"/><path d="M1202.90 251.00 A36.2 36.2 0 1 1 1254.10 251.00" fill="none" stroke="#000" stroke-width="1.1"/><circle cx="1228.5" cy="225.4" r="32.6" fill="#b8b8b8" stroke="#000" stroke-width="1.1"/><path d="M1205.87 248.03 A32 32 0 0 1 1251.13 202.77 L1228.5 225.4 Z" fill="#d4d4d4"/><path d="M1205.87 248.03 L1208.70 245.20 M1251.13 202.77 L1248.30 205.60" stroke="#444" stroke-width="1"/><circle cx="1228.5" cy="225.4" r="26.8" fill="#0000cc" stroke="#000" stroke-width="1.1"/><path d="M1197.0 255.9 L1205.0 249.9 M1260.0 255.9 L1252.0 249.9" stroke="#000" stroke-width="1.4"/><path d="M1230.91 220.12 L1238.00 204.56" stroke="#ffffd0" stroke-width="2"/></svg>

<!-- Vertical group -->
<div class="grp" style="left:1085px;top:297px;width:190px;height:284px"></div>
<div class="gl" style="left:1167px;top:291px">Vertical</div>
<div class="chk" style="left:1094px;top:314px"></div>
<svg class="a" style="left:1094px;top:314px" width="13" height="13"><path d="M2.5 6.5L5 9L10.5 3" fill="none" stroke="#333" stroke-width="1.3"/></svg>
<div class="t" style="left:1110px;top:315px">CH1</div>
<div class="cb" style="left:1094px;top:335px;width:74px"><span>1.00V</span><i></i></div>
<div class="cb dis" style="left:1094px;top:370px;width:74px"><span>DC</span><i></i></div>
<div class="cb" style="left:1094px;top:405px;width:74px"><span>x1</span><i></i></div>
<svg class="a" style="left:1188.8px;top:320.3px" width="80" height="80" viewBox="1188.8 320.3 80 80"><path d="M1204.26 384.84 A34.7 34.7 0 1 1 1253.34 384.84" fill="none" stroke="#fff" stroke-width="2"/><path d="M1203.20 385.90 A36.2 36.2 0 1 1 1254.40 385.90" fill="none" stroke="#000" stroke-width="1.1"/><circle cx="1228.8" cy="360.3" r="32.6" fill="#b8b8b8" stroke="#000" stroke-width="1.1"/><path d="M1206.17 382.93 A32 32 0 0 1 1251.43 337.67 L1228.8 360.3 Z" fill="#d4d4d4"/><path d="M1206.17 382.93 L1209.00 380.10 M1251.43 337.67 L1248.60 340.50" stroke="#444" stroke-width="1"/><circle cx="1228.8" cy="360.3" r="26.8" fill="#ffff00" stroke="#000" stroke-width="1.1"/><path d="M1197.3 390.8 L1205.3 384.8 M1260.3 390.8 L1252.3 384.8" stroke="#000" stroke-width="1.4"/><path d="M1223.01 356.54 L1209.51 347.77" stroke="#e8e8d8" stroke-width="2"/></svg>
<div class="chk" style="left:1205px;top:412px"></div>
<div class="t" style="left:1221px;top:413px">Invert</div>

<div class="chk" style="left:1094px;top:454px"></div>
<svg class="a" style="left:1094px;top:454px" width="13" height="13"><path d="M2.5 6.5L5 9L10.5 3" fill="none" stroke="#333" stroke-width="1.3"/></svg>
<div class="t" style="left:1110px;top:455px">CH2</div>
<div class="cb" style="left:1094px;top:475px;width:74px"><span>1.00V</span><i></i></div>
<div class="cb dis" style="left:1094px;top:510px;width:74px"><span>DC</span><i></i></div>
<div class="cb" style="left:1094px;top:545px;width:74px"><span>x1</span><i></i></div>
<svg class="a" style="left:1188.5px;top:462.4px" width="80" height="80" viewBox="1188.5 462.4 80 80"><path d="M1203.96 526.94 A34.7 34.7 0 1 1 1253.04 526.94" fill="none" stroke="#fff" stroke-width="2"/><path d="M1202.90 528.00 A36.2 36.2 0 1 1 1254.10 528.00" fill="none" stroke="#000" stroke-width="1.1"/><circle cx="1228.5" cy="502.4" r="32.6" fill="#b8b8b8" stroke="#000" stroke-width="1.1"/><path d="M1205.87 525.03 A32 32 0 0 1 1251.13 479.77 L1228.5 502.4 Z" fill="#d4d4d4"/><path d="M1205.87 525.03 L1208.70 522.20 M1251.13 479.77 L1248.30 482.60" stroke="#444" stroke-width="1"/><circle cx="1228.5" cy="502.4" r="26.8" fill="#00ff00" stroke="#000" stroke-width="1.1"/><path d="M1197.0 532.9 L1205.0 526.9 M1260.0 532.9 L1252.0 526.9" stroke="#000" stroke-width="1.4"/><path d="M1223.24 498.58 L1209.89 488.88" stroke="#f0e8e0" stroke-width="2"/></svg>
<div class="chk" style="left:1205px;top:552px"></div>
<div class="t" style="left:1221px;top:553px">Invert</div>

<!-- Trigger group -->
<div class="grp" style="left:1085px;top:600px;width:190px;height:130px"></div>
<div class="gl" style="left:1168px;top:594px">Trigger</div>
<div class="t" style="left:1098px;top:626px">Trigger Mode</div>
<div class="cb" style="left:1194px;top:622px;width:74px"><span>Edge</span><i></i></div>
<div class="t" style="left:1098px;top:661px">Trigger Sweep</div>
<div class="cb" style="left:1194px;top:657px;width:74px"><span>AUTO</span><i></i></div>
<div class="t" style="left:1098px;top:696px">Trigger Source</div>
<div class="cb" style="left:1194px;top:692px;width:74px"><span>CH1</span><i></i></div>
<!-- re-cover clipped area -->
<div class="a" style="left:1263px;top:148px;width:17px;height:590px;background:#f0f0f0"></div>
<svg class="a" style="left:1263px;top:148px" width="17" height="590">
 <path d="M5.5 11L9 7.5L12.5 11" fill="none" stroke="#505050" stroke-width="1.9"/>
 <rect x="1.5" y="17" width="14" height="399" fill="#cdcdcd"/>
 <path d="M5.5 563.5L9 567L12.5 563.5" fill="none" stroke="#505050" stroke-width="1.9"/>
</svg>
<div class="a" style="left:1080px;top:722px;width:183px;height:16px;background:#f0f0f0"></div>
<svg class="a" style="left:1080px;top:722px" width="184" height="16">
 <path d="M10 4.5L6.5 8L10 11.5" fill="none" stroke="#505050" stroke-width="1.9"/>
 <rect x="17" y="1" width="127" height="14" fill="#cdcdcd"/>
 <path d="M173 4.5L176.5 8L173 11.5" fill="none" stroke="#505050" stroke-width="1.9"/>
</svg>
<div class="a" style="left:1076px;top:738px;width:204px;height:1px;background:#dcdcdc"></div>


<!-- status bar -->
<div class="t" style="left:4px;top:744px">Running...</div>
<div class="t" style="left:1176px;top:744px;letter-spacing:-0.35px">17-04-2020&nbsp; 15:39</div>
</body></html>
